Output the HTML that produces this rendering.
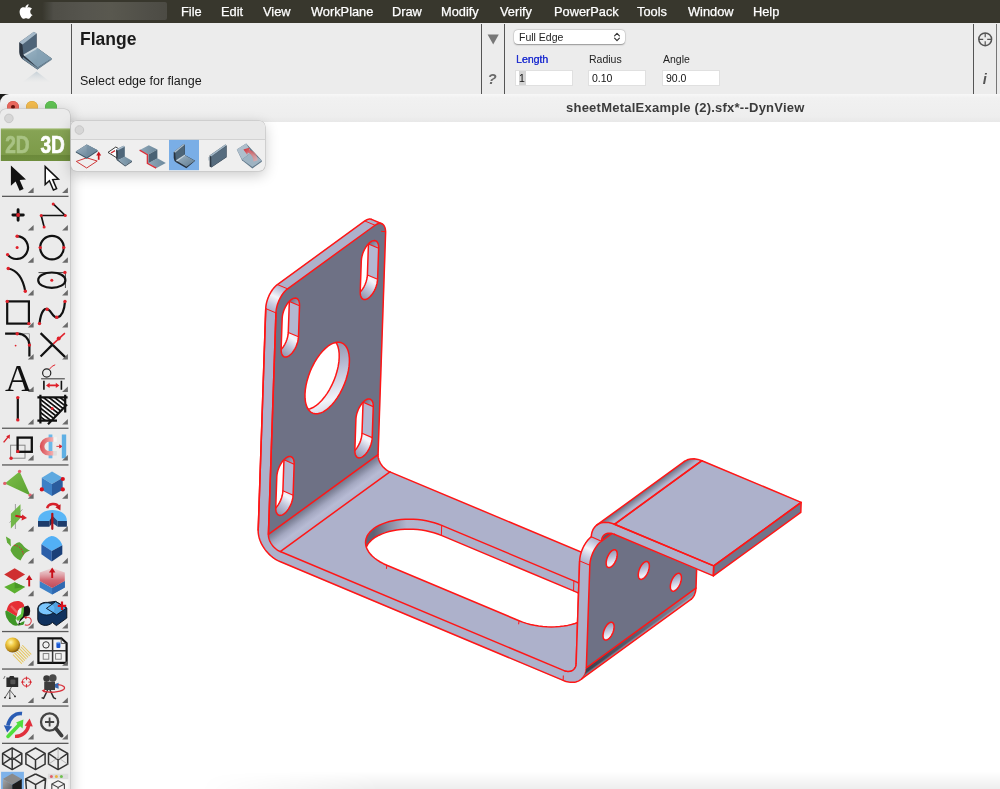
<!DOCTYPE html>
<html>
<head>
<meta charset="utf-8">
<title>sheetMetalExample</title>
<style>
*{box-sizing:border-box;margin:0;padding:0}
html,body{width:1000px;height:789px;overflow:hidden;background:#fff;font-family:"Liberation Sans",sans-serif;}
#root{position:relative;width:1000px;height:789px;overflow:hidden;background:#fff;opacity:.9999;will-change:transform}
.abs{position:absolute}
#menubar{left:0;top:0;width:1000px;height:23px;background:#38372d;color:#fff;font-size:12.8px}
#menubar span{position:absolute;top:3.5px;white-space:nowrap;-webkit-text-stroke:.25px #fff}
#blur{left:42px;top:2px;width:125px;height:18px;background:linear-gradient(90deg,rgba(80,79,72,0),#4f4e47 9%,#56554e 35%,#59584f 55%,#504f48 85%,#4c4b44 100%);border-radius:2px;filter:blur(.5px)}
#prompt{left:0;top:23px;width:1000px;height:72px;background:#ececec}
.vline{position:absolute;width:1px;background:#555}
#title{left:80px;top:29px;font-size:17.5px;font-weight:bold;color:#1a1a1a}
#hint{left:80px;top:73.8px;font-size:12.5px;color:#1a1a1a}
.lbl{position:absolute;font-size:10.5px;color:#222}
.inp{position:absolute;height:16px;width:58px;background:#fff;border:1px solid #e0e0e0;font-size:10.5px;color:#111;padding:1px 3px;line-height:13px}
#winbar{left:0;top:95px;width:1000px;height:26px;background:#ececec;border-top-left-radius:9px}
#wintitle{left:566px;top:100px;font-size:13px;font-weight:bold;color:#3c3c3c;white-space:nowrap;letter-spacing:.24px}
#canvas{left:0;top:122px;width:1000px;height:667px;background:#fff}
</style>
</head>
<body>
<div id="root">
  <!-- macOS menu bar -->
  <div id="menubar" class="abs">
    <div id="blur" class="abs"></div>
    <span style="left:181px">File</span>
    <span style="left:221px">Edit</span>
    <span style="left:263px">View</span>
    <span style="left:311px">WorkPlane</span>
    <span style="left:392px">Draw</span>
    <span style="left:441px">Modify</span>
    <span style="left:500px">Verify</span>
    <span style="left:554px">PowerPack</span>
    <span style="left:637px">Tools</span>
    <span style="left:688px">Window</span>
    <span style="left:753px">Help</span>
  </div>
  <!-- prompt / tool parameter bar -->
  <div id="prompt" class="abs"></div>
  <div class="vline" style="left:71px;top:24px;height:70px"></div>
  <div class="vline" style="left:481px;top:24px;height:70px"></div>
  <div class="vline" style="left:503.5px;top:24px;height:70px"></div>
  <div class="vline" style="left:973px;top:24px;height:70px"></div>
  <div id="title" class="abs">Flange</div>
  <div id="hint" class="abs">Select edge for flange</div>
  <!-- window title bar -->
  <!-- apple logo -->
  <svg class="abs" style="left:17.9px;top:3.5px" width="15.2" height="16" viewBox="0 0 170 200">
    <path fill="#fff" d="M150 145c-3 7-6 13-10 19-6 8-10 14-14 17-5 5-11 8-17 8-4 0-10-1-16-4-6-3-12-4-17-4-5 0-11 1-17 4-6 3-11 4-15 4-6 0-12-3-18-8-4-3-9-10-15-18-6-9-12-20-16-32C-9 118-11 105-11 93c0-14 3-26 9-36 5-8 11-14 19-19 8-5 16-7 25-7 5 0 11 2 19 5 8 3 13 5 15 5 2 0 8-2 18-6 9-3 17-5 24-4 18 1 31 8 40 21-16 10-24 23-24 41 0 14 5 25 15 34 4 4 9 8 15 10-1 3-3 6-4 8zM110-2c0 11-4 20-11 29-9 10-20 16-32 15 0-1 0-3 0-4 0-10 4-21 12-30 4-4 9-8 15-11 6-3 12-5 17-5 0 2 0 4 0 6z" transform="translate(20,12) scale(0.92)"/>
  </svg>
  <!-- prompt icon: flange -->
  <svg class="abs" style="left:0;top:22px" width="75" height="75" viewBox="0 22 75 75">
    <defs>
      <linearGradient id="pi1" x1="0" y1="0" x2="1" y2="1"><stop offset="0" stop-color="#9db6c6"/><stop offset="1" stop-color="#6f8ea2"/></linearGradient>
      <linearGradient id="pir" x1="0" y1="0" x2="0" y2="1"><stop offset="0" stop-color="#b9c6cf" stop-opacity=".75"/><stop offset="1" stop-color="#d8dde0" stop-opacity="0"/></linearGradient>
    </defs>
    <path d="M19.2 42.6 L33.8 32.1 L36.6 33.5 L36.6 47.6 L51.8 58.6 L37.4 69.4 L23 59.5 Q19.4 56.8 19.2 52 Z" fill="#2b3541"/>
    <path d="M22.3 43.8 L36.4 34 L36.4 47.4 L23.4 54.6 Z" fill="#4e6478"/>
    <path d="M19.3 42.3 L33.8 31.8 L36.8 33.6 L22.5 44.4 Z" fill="#a4b8c8"/>
    <path d="M23.6 55 L36.6 47.6 L51.6 58.5 L37.5 67.6 Z" fill="url(#pi1)"/>
    <path d="M23.4 54.4 L36.5 47 L37.6 48.4 L24.6 56 Z" fill="#c9d6de"/>
    <path d="M36.6 47.6 L51.6 58.5 L37.5 67.6 Z" fill="#86a2b4" opacity=".6"/>
    <path d="M23 57 L37.4 67.4 L51.8 58.4 L51.8 59.8 L37.4 69.4 L22.6 59 Z" fill="#6f8798"/>
    <path d="M36.6 71.6 L51 82.6 L22 82.6 Z" fill="url(#pir)"/>
  </svg>
  <!-- triangle & ? -->
  <svg class="abs" style="left:484px;top:30px" width="20" height="60" viewBox="484 30 20 60">
    <path d="M487.6 34.4 L498.8 34.4 L493.2 44.4 Z" fill="#777"/>
    <text x="487.5" y="84" font-family="Liberation Sans" font-style="italic" font-weight="bold" font-size="15" fill="#6a6a6a">?</text>
  </svg>
  <!-- dropdown -->
  <div class="abs" style="left:514px;top:30px;width:111px;height:14px;background:#fff;border-radius:4px;box-shadow:0 0.5px 1.5px rgba(0,0,0,.35), 0 0 0 0.5px rgba(0,0,0,.08)"></div>
  <div class="abs" style="left:519px;top:31px;font-size:10.5px;color:#222;line-height:12px">Full Edge</div>
  <svg class="abs" style="left:613px;top:32px" width="8" height="10" viewBox="0 0 8 10"><path d="M1.6 3.8 L4 1.4 L6.4 3.8 M1.6 6.2 L4 8.6 L6.4 6.2" fill="none" stroke="#333" stroke-width="1.2" stroke-linecap="round" stroke-linejoin="round"/></svg>
  <!-- labels -->
  <div class="lbl" style="left:516px;top:53px;color:#1f2fd0;text-shadow:0.3px 0 0 #1f2fd0">Length</div>
  <div class="lbl" style="left:589px;top:53px">Radius</div>
  <div class="lbl" style="left:663px;top:53px">Angle</div>
  <div class="inp" style="left:515px;top:70px"><span style="background:#d4d4d4;padding:1px 1px 1px 0">1</span></div>
  <div class="inp" style="left:588px;top:70px">0.10</div>
  <div class="inp" style="left:662px;top:70px">90.0</div>
  <!-- right icons -->
  <svg class="abs" style="left:975px;top:28px" width="22" height="62" viewBox="975 28 22 62">
    <circle cx="985.2" cy="39.3" r="6.4" fill="none" stroke="#555" stroke-width="1.5"/>
    <path d="M985.2 33 V37.3 M985.2 41.3 V45.6 M978.9 39.3 H983.2 M987.2 39.3 H991.5" stroke="#555" stroke-width="1.2"/>
    <text x="982.8" y="83.6" font-family="Liberation Sans" font-style="italic" font-weight="bold" font-size="14.5" fill="#555">i</text>
  </svg>
  <div class="vline" style="left:996px;top:24px;height:70px;background:#777"></div>
  <!-- window corner + traffic lights -->
  <div class="abs" style="left:0;top:94px;width:12px;height:12px;background:#1c1c1a"></div>
  <div class="abs" style="left:0;top:94px;width:1000px;height:28px;background:linear-gradient(#f7f7f7 0,#f1f1f1 14%,#eeeeee 80%,#e8e8e8 100%);border-top-left-radius:9px"></div>
  <div class="abs" style="left:7.2px;top:101.3px;width:12px;height:12px;border-radius:6px;background:#ee6a5f;box-shadow:inset 0 0 0 .5px #d5554a"></div>
  <div class="abs" style="left:11.2px;top:105.3px;width:4px;height:4px;border-radius:2px;background:#6b120d"></div>
  <div class="abs" style="left:26.2px;top:101.3px;width:12px;height:12px;border-radius:6px;background:#f5bd4f;box-shadow:inset 0 0 0 .5px #dba53d"></div>
  <div class="abs" style="left:45.2px;top:101.3px;width:12px;height:12px;border-radius:6px;background:#61c454;box-shadow:inset 0 0 0 .5px #4fae43"></div>

  <div id="wintitle" class="abs">sheetMetalExample (2).sfx*--DynView</div>
  <div id="canvas" class="abs"></div>
  <div class="abs" style="left:200px;top:771px;width:800px;height:18px;background:linear-gradient(rgba(0,0,0,0),rgba(0,0,0,.065));-webkit-mask-image:linear-gradient(90deg,transparent,#000 180px);mask-image:linear-gradient(90deg,transparent,#000 180px)"></div>
<svg class="abs" id="model" style="left:0;top:0" width="1000" height="789" viewBox="0 0 1000 789"><defs><linearGradient id="gBody" gradientUnits="userSpaceOnUse" x1="266.28" y1="292.62" x2="279.65" y2="299.28"><stop offset="0" stop-color="#b9bdd6"/><stop offset="1" stop-color="#b9bdd6"/></linearGradient><linearGradient id="gCorner1" gradientUnits="userSpaceOnUse" x1="270.84" y1="310.76" x2="282.49" y2="286.69"><stop offset="0" stop-color="#adb1cb"/><stop offset="0.25" stop-color="#c9cce0"/><stop offset="0.55" stop-color="#f4f5fa"/><stop offset="0.85" stop-color="#c3c6dc"/><stop offset="1" stop-color="#adb1cb"/></linearGradient><linearGradient id="gSlotWall" gradientUnits="userSpaceOnUse" x1="373.99" y1="528.41" x2="451.89" y2="529.67"><stop offset="0" stop-color="#5f6274"/><stop offset="0.18" stop-color="#858a9f"/><stop offset="0.42" stop-color="#b2b6ce"/><stop offset="1" stop-color="#adb1cb"/></linearGradient><clipPath id="cSlot"><path d="M441.69,525.39 L438.08,523.99 L434.28,522.76 L430.33,521.69 L426.26,520.81 L422.10,520.11 L417.87,519.61 L413.63,519.30 L409.38,519.18 L405.17,519.27 L401.04,519.56 L397.00,520.04 L393.09,520.71 L389.35,521.57 L385.79,522.61 L382.46,523.83 L379.36,525.21 L376.53,526.74 L373.99,528.41 L371.75,530.21 L369.84,532.13 L368.27,534.14 L367.04,536.25 L366.18,538.42 L365.68,540.64 L365.55,542.90 L365.79,545.18 L366.41,547.45 L367.38,549.72 L368.71,551.94 L370.39,554.12 L372.41,556.23 L374.74,558.26 L377.37,560.19 L380.29,562.01 L383.46,563.70 L386.87,565.24 L519.06,620.71 L522.67,622.11 L526.47,623.35 L530.42,624.41 L534.49,625.29 L538.65,625.99 L542.88,626.50 L547.12,626.81 L551.37,626.92 L555.58,626.83 L559.71,626.55 L563.75,626.06 L567.66,625.39 L571.40,624.53 L574.96,623.49 L578.29,622.27 L581.39,620.90 L584.22,619.36 L586.76,617.69 L589.00,615.89 L590.91,613.97 L592.48,611.96 L593.71,609.86 L594.57,607.69 L595.07,605.46 L595.20,603.20 L594.96,600.93 L594.34,598.65 L593.37,596.39 L592.04,594.16 L590.36,591.98 L588.34,589.87 L586.01,587.84 L583.38,585.91 L580.46,584.10 L577.29,582.41 L573.88,580.86Z"/></clipPath><linearGradient id="gBend1" gradientUnits="userSpaceOnUse" x1="323.23" y1="494.54" x2="335.47" y2="511.38"><stop offset="0" stop-color="#72758a"/><stop offset="0.18" stop-color="#85899f"/><stop offset="0.42" stop-color="#a4a8c1"/><stop offset="0.7" stop-color="#b7bbd4"/><stop offset="1" stop-color="#b2b6cf"/></linearGradient><clipPath id="cgbh"><path d="M349.40,361.85 L349.36,357.81 L348.93,354.12 L348.13,350.83 L346.97,348.01 L345.48,345.71 L343.67,343.95 L341.58,342.78 L339.24,342.21 L336.70,342.25 L334.00,342.91 L331.17,344.16 L328.28,345.99 L325.38,348.38 L322.50,351.26 L319.70,354.61 L317.03,358.35 L314.54,362.44 L312.26,366.78 L310.24,371.32 L308.51,375.98 L307.10,380.66 L306.03,385.31 L305.32,389.82 L304.99,394.14 L305.04,398.18 L305.46,401.87 L306.26,405.16 L307.42,407.98 L308.92,410.28 L310.72,412.04 L312.81,413.21 L315.15,413.78 L317.69,413.74 L320.40,413.08 L323.22,411.83 L326.11,409.99 L329.02,407.61 L331.89,404.73 L334.69,401.38 L337.36,397.64 L339.85,393.55 L342.13,389.21 L344.15,384.67 L345.89,380.01 L347.30,375.33 L348.37,370.68 L349.07,366.17Z"/></clipPath><linearGradient id="gbh" gradientUnits="userSpaceOnUse" x1="329.42" y1="342.21" x2="349.40" y2="413.78"><stop offset="0" stop-color="#8f93aa"/><stop offset="0.35" stop-color="#b9bdd5"/><stop offset="0.75" stop-color="#f2f3f9"/><stop offset="1" stop-color="#c4c7dc"/></linearGradient><clipPath id="cgs1"><path d="M294.15,464.14 L294.09,462.07 L293.77,460.25 L293.20,458.74 L292.39,457.59 L291.37,456.82 L290.18,456.47 L288.84,456.55 L287.40,457.05 L285.90,457.95 L284.39,459.24 L282.91,460.86 L281.50,462.78 L280.22,464.93 L279.10,467.25 L278.17,469.66 L277.47,472.10 L277.00,474.49 L276.80,476.76 L275.74,507.76 L275.80,509.83 L276.12,511.65 L276.69,513.16 L277.50,514.32 L278.52,515.08 L279.71,515.43 L281.05,515.35 L282.49,514.86 L283.99,513.95 L285.51,512.67 L286.99,511.04 L288.39,509.12 L289.67,506.97 L290.79,504.65 L291.72,502.24 L292.43,499.80 L292.89,497.41 L293.09,495.14Z"/></clipPath><linearGradient id="gs1t" gradientUnits="userSpaceOnUse" x1="294.15" y1="464.14" x2="285.90" y2="457.95"><stop offset="0" stop-color="#a9adc6"/><stop offset="0.5" stop-color="#8e92a8"/><stop offset="1" stop-color="#6f7286"/></linearGradient><linearGradient id="gs1b" gradientUnits="userSpaceOnUse" x1="293.09" y1="495.14" x2="278.52" y2="515.08"><stop offset="0" stop-color="#e9eaf3"/><stop offset="0.2" stop-color="#f4f5fa"/><stop offset="0.55" stop-color="#bfc3d9"/><stop offset="1" stop-color="#8f93ab"/></linearGradient><clipPath id="cgs2"><path d="M299.53,305.74 L299.48,303.67 L299.16,301.85 L298.58,300.34 L297.78,299.19 L296.76,298.42 L295.56,298.07 L294.22,298.15 L292.78,298.65 L291.28,299.55 L289.77,300.84 L288.29,302.46 L286.89,304.38 L285.61,306.53 L284.49,308.85 L283.56,311.26 L282.85,313.70 L282.39,316.09 L282.18,318.36 L281.13,349.36 L281.19,351.43 L281.51,353.25 L282.08,354.76 L282.89,355.92 L283.90,356.68 L285.10,357.03 L286.44,356.95 L287.88,356.46 L289.38,355.55 L290.89,354.27 L292.37,352.64 L293.77,350.72 L295.06,348.57 L296.18,346.25 L297.10,343.84 L297.81,341.40 L298.27,339.01 L298.48,336.74Z"/></clipPath><linearGradient id="gs2t" gradientUnits="userSpaceOnUse" x1="299.53" y1="305.74" x2="291.28" y2="299.55"><stop offset="0" stop-color="#a9adc6"/><stop offset="0.5" stop-color="#8e92a8"/><stop offset="1" stop-color="#6f7286"/></linearGradient><linearGradient id="gs2b" gradientUnits="userSpaceOnUse" x1="298.48" y1="336.74" x2="283.90" y2="356.68"><stop offset="0" stop-color="#e9eaf3"/><stop offset="0.2" stop-color="#f4f5fa"/><stop offset="0.55" stop-color="#bfc3d9"/><stop offset="1" stop-color="#8f93ab"/></linearGradient><clipPath id="cgs3"><path d="M373.26,406.63 L373.21,404.56 L372.89,402.74 L372.31,401.23 L371.51,400.07 L370.49,399.31 L369.29,398.96 L367.96,399.03 L366.51,399.53 L365.01,400.44 L363.50,401.72 L362.02,403.35 L360.62,405.27 L359.34,407.42 L358.22,409.73 L357.29,412.15 L356.58,414.59 L356.12,416.98 L355.91,419.24 L354.86,450.24 L354.92,452.32 L355.24,454.14 L355.81,455.65 L356.62,456.80 L357.63,457.57 L358.83,457.92 L360.17,457.84 L361.61,457.34 L363.11,456.44 L364.62,455.15 L366.10,453.53 L367.50,451.61 L368.79,449.46 L369.91,447.14 L370.84,444.73 L371.54,442.29 L372.00,439.90 L372.21,437.63Z"/></clipPath><linearGradient id="gs3t" gradientUnits="userSpaceOnUse" x1="373.26" y1="406.63" x2="365.01" y2="400.44"><stop offset="0" stop-color="#a9adc6"/><stop offset="0.5" stop-color="#8e92a8"/><stop offset="1" stop-color="#6f7286"/></linearGradient><linearGradient id="gs3b" gradientUnits="userSpaceOnUse" x1="372.21" y1="437.63" x2="357.63" y2="457.57"><stop offset="0" stop-color="#e9eaf3"/><stop offset="0.2" stop-color="#f4f5fa"/><stop offset="0.55" stop-color="#bfc3d9"/><stop offset="1" stop-color="#8f93ab"/></linearGradient><clipPath id="cgs4"><path d="M378.65,248.23 L378.59,246.16 L378.27,244.34 L377.70,242.83 L376.89,241.67 L375.88,240.91 L374.68,240.56 L373.34,240.63 L371.90,241.13 L370.40,242.04 L368.89,243.32 L367.41,244.95 L366.01,246.87 L364.72,249.02 L363.60,251.33 L362.67,253.75 L361.97,256.19 L361.51,258.58 L361.30,260.84 L360.25,291.84 L360.30,293.92 L360.62,295.74 L361.20,297.25 L362.00,298.40 L363.02,299.17 L364.21,299.52 L365.55,299.44 L367.00,298.94 L368.50,298.04 L370.01,296.75 L371.49,295.13 L372.89,293.21 L374.17,291.06 L375.29,288.74 L376.22,286.33 L376.93,283.89 L377.39,281.50 L377.60,279.23Z"/></clipPath><linearGradient id="gs4t" gradientUnits="userSpaceOnUse" x1="378.65" y1="248.23" x2="370.40" y2="242.04"><stop offset="0" stop-color="#a9adc6"/><stop offset="0.5" stop-color="#8e92a8"/><stop offset="1" stop-color="#6f7286"/></linearGradient><linearGradient id="gs4b" gradientUnits="userSpaceOnUse" x1="377.60" y1="279.23" x2="363.02" y2="299.17"><stop offset="0" stop-color="#e9eaf3"/><stop offset="0.2" stop-color="#f4f5fa"/><stop offset="0.55" stop-color="#bfc3d9"/><stop offset="1" stop-color="#8f93ab"/></linearGradient><linearGradient id="gCorner2" gradientUnits="userSpaceOnUse" x1="584.73" y1="563.07" x2="596.38" y2="539.00"><stop offset="0" stop-color="#adb1cb"/><stop offset="0.25" stop-color="#c9cce0"/><stop offset="0.55" stop-color="#f4f5fa"/><stop offset="0.85" stop-color="#c3c6dc"/><stop offset="1" stop-color="#adb1cb"/></linearGradient><linearGradient id="gUnderL" gradientUnits="userSpaceOnUse" x1="584.73" y1="674.76" x2="694.38" y2="595.05"><stop offset="0" stop-color="#3b3e4b"/><stop offset="0.5" stop-color="#5d6072"/><stop offset="1" stop-color="#858a9e"/></linearGradient><linearGradient id="gUnder" gradientUnits="userSpaceOnUse" x1="586.34" y1="667.81" x2="590.00" y2="672.84"><stop offset="0" stop-color="rgba(200,203,221,0)"/><stop offset="0.55" stop-color="rgba(200,203,221,0)"/><stop offset="1" stop-color="rgba(200,203,221,.75)"/></linearGradient><clipPath id="cgsh0"><path d="M617.26,554.63 L617.21,553.14 L616.95,551.87 L616.48,550.86 L615.83,550.15 L615.02,549.77 L614.09,549.73 L613.06,550.03 L611.98,550.66 L610.90,551.60 L609.84,552.82 L608.85,554.25 L607.98,555.86 L607.25,557.57 L606.69,559.33 L606.32,561.06 L606.16,562.70 L606.21,564.18 L606.48,565.45 L606.94,566.46 L607.59,567.17 L608.40,567.56 L609.34,567.60 L610.36,567.30 L611.44,566.66 L612.53,565.72 L613.59,564.51 L614.57,563.07 L615.45,561.47 L616.18,559.75 L616.74,558.00 L617.10,556.27Z"/></clipPath><linearGradient id="gsh0" gradientUnits="userSpaceOnUse" x1="612.27" y1="549.73" x2="617.26" y2="567.60"><stop offset="0" stop-color="#8f93aa"/><stop offset="0.35" stop-color="#b9bdd5"/><stop offset="0.75" stop-color="#f2f3f9"/><stop offset="1" stop-color="#c4c7dc"/></linearGradient><clipPath id="cgsh1"><path d="M649.35,566.41 L649.30,564.93 L649.03,563.66 L648.57,562.65 L647.92,561.94 L647.11,561.55 L646.18,561.51 L645.15,561.81 L644.07,562.45 L642.98,563.39 L641.93,564.60 L640.94,566.04 L640.07,567.64 L639.33,569.36 L638.77,571.11 L638.41,572.85 L638.25,574.48 L638.30,575.97 L638.57,577.24 L639.03,578.25 L639.68,578.96 L640.49,579.34 L641.42,579.38 L642.45,579.08 L643.53,578.45 L644.62,577.51 L645.67,576.29 L646.66,574.86 L647.53,573.25 L648.27,571.54 L648.83,569.78 L649.19,568.05Z"/></clipPath><linearGradient id="gsh1" gradientUnits="userSpaceOnUse" x1="644.36" y1="561.51" x2="649.35" y2="579.38"><stop offset="0" stop-color="#8f93aa"/><stop offset="0.35" stop-color="#b9bdd5"/><stop offset="0.75" stop-color="#f2f3f9"/><stop offset="1" stop-color="#c4c7dc"/></linearGradient><clipPath id="cgsh2"><path d="M681.44,578.20 L681.39,576.71 L681.12,575.44 L680.66,574.43 L680.01,573.72 L679.20,573.34 L678.26,573.30 L677.24,573.60 L676.16,574.23 L675.07,575.17 L674.01,576.39 L673.03,577.82 L672.15,579.43 L671.42,581.14 L670.86,582.90 L670.50,584.63 L670.34,586.27 L670.39,587.75 L670.65,589.02 L671.12,590.03 L671.77,590.74 L672.58,591.13 L673.51,591.17 L674.54,590.87 L675.62,590.23 L676.70,589.29 L677.76,588.08 L678.75,586.64 L679.62,585.03 L680.35,583.32 L680.91,581.56 L681.28,579.83Z"/></clipPath><linearGradient id="gsh2" gradientUnits="userSpaceOnUse" x1="676.44" y1="573.30" x2="681.44" y2="591.17"><stop offset="0" stop-color="#8f93aa"/><stop offset="0.35" stop-color="#b9bdd5"/><stop offset="0.75" stop-color="#f2f3f9"/><stop offset="1" stop-color="#c4c7dc"/></linearGradient><clipPath id="cgsh3"><path d="M614.12,627.13 L614.07,625.65 L613.80,624.38 L613.34,623.37 L612.69,622.66 L611.88,622.27 L610.95,622.23 L609.92,622.53 L608.84,623.17 L607.75,624.11 L606.70,625.32 L605.71,626.76 L604.84,628.37 L604.10,630.08 L603.54,631.84 L603.18,633.57 L603.02,635.20 L603.07,636.69 L603.34,637.96 L603.80,638.97 L604.45,639.68 L605.26,640.06 L606.19,640.10 L607.22,639.80 L608.30,639.17 L609.39,638.23 L610.44,637.01 L611.43,635.58 L612.30,633.97 L613.04,632.26 L613.60,630.50 L613.96,628.77Z"/></clipPath><linearGradient id="gsh3" gradientUnits="userSpaceOnUse" x1="609.13" y1="622.23" x2="614.12" y2="640.10"><stop offset="0" stop-color="#8f93aa"/><stop offset="0.35" stop-color="#b9bdd5"/><stop offset="0.75" stop-color="#f2f3f9"/><stop offset="1" stop-color="#c4c7dc"/></linearGradient><linearGradient id="gBend3" gradientUnits="userSpaceOnUse" x1="596.96" y1="524.96" x2="602.69" y2="532.84"><stop offset="0" stop-color="#6a6d80"/><stop offset="0.35" stop-color="#8d91a7"/><stop offset="0.75" stop-color="#b3b7cf"/><stop offset="1" stop-color="#adb1cb"/></linearGradient></defs><path d="M258.21,530.12 L265.74,308.62 L265.80,307.56 L265.90,306.46 L266.06,305.34 L266.26,304.20 L266.50,303.05 L266.79,301.88 L267.12,300.71 L267.50,299.54 L267.91,298.37 L268.37,297.21 L268.85,296.07 L269.38,294.94 L269.93,293.84 L270.51,292.77 L271.13,291.73 L271.76,290.73 L272.42,289.77 L273.10,288.86 L273.79,287.99 L274.50,287.18 L275.21,286.43 L275.93,285.74 L276.66,285.11 L277.39,284.55 L364.83,220.98 L365.56,220.49 L366.28,220.06 L366.99,219.71 L367.69,219.44 L368.37,219.24 L369.04,219.11 L369.69,219.06 L370.31,219.09 L370.91,219.19 L371.48,219.37 L381.68,223.65 L382.22,223.91 L382.72,224.24 L383.19,224.64 L383.63,225.12 L384.02,225.66 L384.38,226.27 L384.69,226.94 L384.95,227.68 L385.18,228.47 L385.35,229.32 L385.48,230.22 L385.57,231.17 L385.60,232.16 L385.59,233.19 L378.06,454.69 L268.41,534.40Z" fill="#adb1cb" stroke="#adb1cb" stroke-width="0.6" stroke-linejoin="round" stroke-linecap="round" />
<path d="M265.74,308.62 L265.80,307.56 L265.91,306.46 L266.06,305.34 L266.26,304.20 L266.50,303.05 L266.79,301.88 L267.12,300.71 L267.50,299.54 L267.91,298.37 L268.36,297.21 L268.85,296.07 L269.38,294.94 L269.93,293.84 L270.51,292.77 L271.13,291.73 L271.76,290.73 L272.42,289.77 L273.10,288.85 L273.79,287.99 L274.49,287.18 L275.21,286.43 L275.93,285.74 L276.66,285.11 L277.39,284.55 L287.59,288.83 L286.86,289.39 L286.13,290.02 L285.41,290.71 L284.69,291.46 L283.99,292.27 L283.30,293.13 L282.62,294.05 L281.96,295.01 L281.33,296.01 L280.71,297.05 L280.13,298.12 L279.58,299.22 L279.05,300.35 L278.56,301.49 L278.11,302.65 L277.70,303.82 L277.32,304.99 L276.99,306.16 L276.70,307.33 L276.46,308.48 L276.26,309.62 L276.11,310.74 L276.00,311.84 L275.94,312.90Z" fill="url(#gCorner1)" stroke="none" stroke-width="1.5" stroke-linejoin="round" stroke-linecap="round" />
<path d="M275.94,312.90 L268.41,534.40 L268.41,534.40 L268.41,535.20 L268.46,536.01 L268.56,536.84 L268.72,537.68 L268.93,538.53 L269.18,539.38 L269.49,540.24 L269.84,541.09 L270.24,541.93 L270.69,542.77 L271.18,543.59 L271.70,544.39 L272.27,545.17 L272.87,545.93 L273.51,546.66 L274.17,547.36 L274.87,548.03 L275.59,548.66 L276.33,549.25 L277.09,549.80 L277.86,550.30 L278.65,550.76 L279.44,551.17 L280.24,551.54 L563.49,670.39 L563.49,670.39 L564.30,670.70 L565.10,670.96 L565.89,671.16 L566.68,671.31 L567.45,671.41 L568.21,671.44 L568.95,671.43 L569.67,671.35 L570.36,671.22 L571.03,671.04 L571.67,670.80 L572.27,670.51 L572.84,670.17 L573.36,669.77 L573.85,669.33 L574.30,668.84 L574.70,668.31 L575.05,667.73 L575.36,667.11 L575.62,666.46 L575.83,665.77 L575.98,665.05 L576.09,664.30 L576.14,663.53 L579.63,560.93 L589.83,565.21 L586.34,667.81 L586.25,669.23 L586.05,670.60 L585.76,671.92 L585.38,673.18 L584.91,674.38 L584.35,675.51 L583.70,676.57 L582.96,677.55 L582.14,678.44 L581.25,679.25 L580.28,679.98 L579.24,680.61 L578.14,681.14 L576.97,681.58 L575.75,681.92 L574.47,682.15 L573.16,682.29 L571.80,682.32 L570.41,682.25 L568.99,682.08 L567.55,681.81 L566.09,681.43 L564.62,680.96 L563.15,680.39 L563.15,680.39 L279.90,561.54 L278.43,560.87 L276.98,560.12 L275.54,559.28 L274.12,558.35 L272.73,557.34 L271.37,556.26 L270.05,555.10 L268.78,553.88 L267.56,552.60 L266.39,551.26 L265.29,549.87 L264.25,548.43 L263.28,546.96 L262.39,545.46 L261.57,543.93 L260.84,542.38 L260.19,540.82 L259.63,539.26 L259.16,537.69 L258.78,536.13 L258.49,534.59 L258.30,533.07 L258.21,531.58 L258.21,530.12 L258.21,530.12 L265.74,308.62Z" fill="#adb1cb" stroke="#adb1cb" stroke-width="0.6" stroke-linejoin="round" stroke-linecap="round" />
<path d="M441.69,525.39 L438.08,523.99 L434.28,522.76 L430.33,521.69 L426.26,520.81 L422.10,520.11 L417.87,519.61 L413.63,519.30 L409.38,519.18 L405.17,519.27 L401.04,519.56 L397.00,520.04 L393.09,520.71 L389.35,521.57 L385.79,522.61 L382.46,523.83 L379.36,525.21 L376.53,526.74 L373.99,528.41 L371.75,530.21 L369.84,532.13 L368.27,534.14 L367.04,536.25 L366.18,538.42 L365.68,540.64 L365.55,542.90 L365.79,545.18 L366.41,547.45 L367.38,549.72 L368.71,551.94 L370.39,554.12 L372.41,556.23 L374.74,558.26 L377.37,560.19 L380.29,562.01 L383.46,563.70 L386.87,565.24 L519.06,620.71 L522.67,622.11 L526.47,623.35 L530.42,624.41 L534.49,625.29 L538.65,625.99 L542.88,626.50 L547.12,626.81 L551.37,626.92 L555.58,626.83 L559.71,626.55 L563.75,626.06 L567.66,625.39 L571.40,624.53 L574.96,623.49 L578.29,622.27 L581.39,620.90 L584.22,619.36 L586.76,617.69 L589.00,615.89 L590.91,613.97 L592.48,611.96 L593.71,609.86 L594.57,607.69 L595.07,605.46 L595.20,603.20 L594.96,600.93 L594.34,598.65 L593.37,596.39 L592.04,594.16 L590.36,591.98 L588.34,589.87 L586.01,587.84 L583.38,585.91 L580.46,584.10 L577.29,582.41 L573.88,580.86Z" fill="url(#gSlotWall)" stroke="none" stroke-width="1.5" stroke-linejoin="round" stroke-linecap="round" />
<g clip-path="url(#cSlot)">
<path d="M441.35,535.39 L437.74,533.99 L433.94,532.76 L429.99,531.69 L425.92,530.81 L421.76,530.11 L417.53,529.61 L413.29,529.30 L409.04,529.18 L404.83,529.27 L400.70,529.56 L396.66,530.04 L392.75,530.71 L389.01,531.57 L385.45,532.61 L382.12,533.83 L379.02,535.21 L376.19,536.74 L373.65,538.41 L371.41,540.21 L369.50,542.13 L367.93,544.14 L366.70,546.25 L365.84,548.42 L365.34,550.64 L365.21,552.90 L365.45,555.18 L366.07,557.45 L367.04,559.72 L368.37,561.94 L370.05,564.12 L372.07,566.23 L374.40,568.26 L377.03,570.19 L379.95,572.01 L383.12,573.70 L386.53,575.24 L518.72,630.71 L522.33,632.11 L526.13,633.35 L530.08,634.41 L534.15,635.29 L538.31,635.99 L542.54,636.50 L546.78,636.81 L551.03,636.92 L555.24,636.83 L559.37,636.55 L563.41,636.06 L567.32,635.39 L571.06,634.53 L574.62,633.49 L577.95,632.27 L581.05,630.90 L583.88,629.36 L586.42,627.69 L588.66,625.89 L590.57,623.97 L592.14,621.96 L593.37,619.86 L594.23,617.69 L594.73,615.46 L594.86,613.20 L594.62,610.93 L594.00,608.65 L593.03,606.39 L591.70,604.16 L590.02,601.98 L588.00,599.87 L585.67,597.84 L583.04,595.91 L580.12,594.10 L576.95,592.41 L573.54,590.86Z" fill="#fff" stroke="#ff1616" stroke-width="1.5" stroke-linejoin="round" stroke-linecap="round" />
</g>
<path d="M280.24,551.54 L575.73,675.53 L685.39,595.82 L389.89,471.82ZM441.69,525.39 L438.08,523.99 L434.28,522.76 L430.33,521.69 L426.26,520.81 L422.10,520.11 L417.87,519.61 L413.63,519.30 L409.38,519.18 L405.17,519.27 L401.04,519.56 L397.00,520.04 L393.09,520.71 L389.35,521.57 L385.79,522.61 L382.46,523.83 L379.36,525.21 L376.53,526.74 L373.99,528.41 L371.75,530.21 L369.84,532.13 L368.27,534.14 L367.04,536.25 L366.18,538.42 L365.68,540.64 L365.55,542.90 L365.79,545.18 L366.41,547.45 L367.38,549.72 L368.71,551.94 L370.39,554.12 L372.41,556.23 L374.74,558.26 L377.37,560.19 L380.29,562.01 L383.46,563.70 L386.87,565.24 L519.06,620.71 L522.67,622.11 L526.47,623.35 L530.42,624.41 L534.49,625.29 L538.65,625.99 L542.88,626.50 L547.12,626.81 L551.37,626.92 L555.58,626.83 L559.71,626.55 L563.75,626.06 L567.66,625.39 L571.40,624.53 L574.96,623.49 L578.29,622.27 L581.39,620.90 L584.22,619.36 L586.76,617.69 L589.00,615.89 L590.91,613.97 L592.48,611.96 L593.71,609.86 L594.57,607.69 L595.07,605.46 L595.20,603.20 L594.96,600.93 L594.34,598.65 L593.37,596.39 L592.04,594.16 L590.36,591.98 L588.34,589.87 L586.01,587.84 L583.38,585.91 L580.46,584.10 L577.29,582.41 L573.88,580.86Z" fill="#adb1cb" stroke="none" stroke-width="1.5" stroke-linejoin="round" stroke-linecap="round" fill-rule="evenodd"/>
<path d="M268.41,534.40 L268.41,535.20 L268.46,536.01 L268.56,536.84 L268.72,537.68 L268.93,538.53 L269.18,539.38 L269.49,540.24 L269.84,541.09 L270.24,541.93 L270.69,542.77 L271.18,543.59 L271.70,544.39 L272.27,545.17 L272.87,545.93 L273.51,546.66 L274.17,547.36 L274.87,548.03 L275.59,548.66 L276.33,549.25 L277.09,549.80 L277.86,550.30 L278.65,550.76 L279.44,551.17 L280.24,551.54 L389.89,471.82 L389.09,471.46 L388.30,471.05 L387.51,470.59 L386.74,470.09 L385.98,469.54 L385.24,468.95 L384.52,468.32 L383.83,467.65 L383.16,466.95 L382.53,466.22 L381.92,465.46 L381.36,464.68 L380.83,463.88 L380.34,463.06 L379.90,462.22 L379.50,461.38 L379.14,460.53 L378.84,459.67 L378.58,458.82 L378.37,457.97 L378.22,457.13 L378.11,456.30 L378.06,455.48 L378.06,454.69Z" fill="url(#gBend1)" stroke="none" stroke-width="1.5" stroke-linejoin="round" stroke-linecap="round" />
<path d="M349.40,361.85 L349.36,357.81 L348.93,354.12 L348.13,350.83 L346.97,348.01 L345.48,345.71 L343.67,343.95 L341.58,342.78 L339.24,342.21 L336.70,342.25 L334.00,342.91 L331.17,344.16 L328.28,345.99 L325.38,348.38 L322.50,351.26 L319.70,354.61 L317.03,358.35 L314.54,362.44 L312.26,366.78 L310.24,371.32 L308.51,375.98 L307.10,380.66 L306.03,385.31 L305.32,389.82 L304.99,394.14 L305.04,398.18 L305.46,401.87 L306.26,405.16 L307.42,407.98 L308.92,410.28 L310.72,412.04 L312.81,413.21 L315.15,413.78 L317.69,413.74 L320.40,413.08 L323.22,411.83 L326.11,409.99 L329.02,407.61 L331.89,404.73 L334.69,401.38 L337.36,397.64 L339.85,393.55 L342.13,389.21 L344.15,384.67 L345.89,380.01 L347.30,375.33 L348.37,370.68 L349.07,366.17Z" fill="url(#gbh)" stroke="none" stroke-width="1.5" stroke-linejoin="round" stroke-linecap="round" />
<g clip-path="url(#cgbh)">
<path d="M339.20,357.57 L339.16,353.53 L338.73,349.84 L337.93,346.55 L336.77,343.73 L335.28,341.43 L333.47,339.67 L331.38,338.50 L329.04,337.93 L326.50,337.97 L323.80,338.63 L320.97,339.88 L318.08,341.71 L315.18,344.10 L312.30,346.98 L309.50,350.33 L306.83,354.07 L304.34,358.16 L302.06,362.50 L300.04,367.04 L298.31,371.70 L296.90,376.38 L295.83,381.03 L295.12,385.54 L294.79,389.86 L294.84,393.90 L295.26,397.59 L296.06,400.88 L297.22,403.70 L298.72,406.00 L300.52,407.76 L302.61,408.93 L304.95,409.50 L307.49,409.46 L310.20,408.80 L313.02,407.55 L315.91,405.71 L318.82,403.33 L321.69,400.45 L324.49,397.10 L327.16,393.36 L329.65,389.27 L331.93,384.93 L333.95,380.39 L335.69,375.73 L337.10,371.05 L338.17,366.40 L338.87,361.89Z" fill="#fff" stroke="#ff1616" stroke-width="1.5" stroke-linejoin="round" stroke-linecap="round" />
</g>
<path d="M294.15,464.14 L294.09,462.07 L293.77,460.25 L293.20,458.74 L292.39,457.59 L291.37,456.82 L290.18,456.47 L288.84,456.55 L287.40,457.05 L285.90,457.95 L284.39,459.24 L282.91,460.86 L281.50,462.78 L280.22,464.93 L279.10,467.25 L278.17,469.66 L277.47,472.10 L277.00,474.49 L276.80,476.76 L275.74,507.76 L275.80,509.83 L276.12,511.65 L276.69,513.16 L277.50,514.32 L278.52,515.08 L279.71,515.43 L281.05,515.35 L282.49,514.86 L283.99,513.95 L285.51,512.67 L286.99,511.04 L288.39,509.12 L289.67,506.97 L290.79,504.65 L291.72,502.24 L292.43,499.80 L292.89,497.41 L293.09,495.14Z" fill="#b3b7d1" stroke="none" stroke-width="1.5" stroke-linejoin="round" stroke-linecap="round" />
<g clip-path="url(#cgs1)">
<path d="M294.15,464.14 L294.09,462.07 L293.77,460.25 L293.20,458.74 L292.39,457.59 L291.37,456.82 L290.18,456.47 L288.84,456.55 L287.40,457.05 L285.90,457.95 L284.39,459.24 L282.91,460.86 L281.50,462.78 L280.22,464.93 L279.10,467.25 L278.17,469.66 L277.47,472.10 L277.00,474.49 L276.80,476.76 L266.60,472.48 L266.80,470.21 L267.27,467.82 L267.97,465.38 L268.90,462.97 L270.02,460.65 L271.30,458.50 L272.71,456.58 L274.19,454.96 L275.70,453.67 L277.20,452.77 L278.64,452.27 L279.98,452.19 L281.17,452.54 L282.19,453.31 L283.00,454.46 L283.57,455.97 L283.89,457.79 L283.95,459.86Z" fill="url(#gs1t)" stroke="none" stroke-width="1.5" stroke-linejoin="round" stroke-linecap="round" />
<path d="M275.74,507.76 L275.80,509.83 L276.12,511.65 L276.69,513.16 L277.50,514.32 L278.52,515.08 L279.71,515.43 L281.05,515.35 L282.49,514.86 L283.99,513.95 L285.51,512.67 L286.99,511.04 L288.39,509.12 L289.67,506.97 L290.79,504.65 L291.72,502.24 L292.43,499.80 L292.89,497.41 L293.09,495.14 L282.89,490.86 L282.69,493.13 L282.23,495.52 L281.52,497.96 L280.59,500.37 L279.47,502.69 L278.19,504.84 L276.79,506.76 L275.31,508.39 L273.79,509.67 L272.29,510.58 L270.85,511.07 L269.51,511.15 L268.32,510.80 L267.30,510.04 L266.49,508.88 L265.92,507.37 L265.60,505.55 L265.54,503.48Z" fill="url(#gs1b)" stroke="none" stroke-width="1.5" stroke-linejoin="round" stroke-linecap="round" />
<path d="M283.95,459.86 L283.89,457.79 L283.57,455.97 L283.00,454.46 L282.19,453.31 L281.17,452.54 L279.98,452.19 L278.64,452.27 L277.20,452.77 L275.70,453.67 L274.19,454.96 L272.71,456.58 L271.30,458.50 L270.02,460.65 L268.90,462.97 L267.97,465.38 L267.27,467.82 L266.80,470.21 L266.60,472.48 L265.54,503.48 L265.60,505.55 L265.92,507.37 L266.49,508.88 L267.30,510.04 L268.32,510.80 L269.51,511.15 L270.85,511.07 L272.29,510.58 L273.79,509.67 L275.31,508.39 L276.79,506.76 L278.19,504.84 L279.47,502.69 L280.59,500.37 L281.52,497.96 L282.23,495.52 L282.69,493.13 L282.89,490.86Z" fill="#fff" stroke="#ff1616" stroke-width="1.5" stroke-linejoin="round" stroke-linecap="round" />
<path d="M294.15,464.14 L283.95,459.86" fill="none" stroke="#ff1616" stroke-width="1.1" stroke-linejoin="round" stroke-linecap="round" />
<path d="M293.09,495.14 L282.89,490.86" fill="none" stroke="#ff1616" stroke-width="1.1" stroke-linejoin="round" stroke-linecap="round" />
</g>
<path d="M299.53,305.74 L299.48,303.67 L299.16,301.85 L298.58,300.34 L297.78,299.19 L296.76,298.42 L295.56,298.07 L294.22,298.15 L292.78,298.65 L291.28,299.55 L289.77,300.84 L288.29,302.46 L286.89,304.38 L285.61,306.53 L284.49,308.85 L283.56,311.26 L282.85,313.70 L282.39,316.09 L282.18,318.36 L281.13,349.36 L281.19,351.43 L281.51,353.25 L282.08,354.76 L282.89,355.92 L283.90,356.68 L285.10,357.03 L286.44,356.95 L287.88,356.46 L289.38,355.55 L290.89,354.27 L292.37,352.64 L293.77,350.72 L295.06,348.57 L296.18,346.25 L297.10,343.84 L297.81,341.40 L298.27,339.01 L298.48,336.74Z" fill="#b3b7d1" stroke="none" stroke-width="1.5" stroke-linejoin="round" stroke-linecap="round" />
<g clip-path="url(#cgs2)">
<path d="M299.53,305.74 L299.48,303.67 L299.16,301.85 L298.58,300.34 L297.78,299.19 L296.76,298.42 L295.56,298.07 L294.22,298.15 L292.78,298.65 L291.28,299.55 L289.77,300.84 L288.29,302.46 L286.89,304.38 L285.61,306.53 L284.49,308.85 L283.56,311.26 L282.85,313.70 L282.39,316.09 L282.18,318.36 L271.98,314.08 L272.19,311.81 L272.65,309.42 L273.36,306.98 L274.29,304.57 L275.41,302.25 L276.69,300.10 L278.09,298.18 L279.57,296.56 L281.08,295.27 L282.58,294.37 L284.02,293.87 L285.36,293.79 L286.56,294.14 L287.58,294.91 L288.38,296.06 L288.96,297.57 L289.28,299.39 L289.33,301.46Z" fill="url(#gs2t)" stroke="none" stroke-width="1.5" stroke-linejoin="round" stroke-linecap="round" />
<path d="M281.13,349.36 L281.19,351.43 L281.51,353.25 L282.08,354.76 L282.89,355.92 L283.90,356.68 L285.10,357.03 L286.44,356.95 L287.88,356.46 L289.38,355.55 L290.89,354.27 L292.37,352.64 L293.77,350.72 L295.06,348.57 L296.18,346.25 L297.10,343.84 L297.81,341.40 L298.27,339.01 L298.48,336.74 L288.28,332.46 L288.07,334.73 L287.61,337.12 L286.90,339.56 L285.98,341.97 L284.86,344.29 L283.57,346.44 L282.17,348.36 L280.69,349.99 L279.18,351.27 L277.68,352.18 L276.24,352.67 L274.90,352.75 L273.70,352.40 L272.69,351.64 L271.88,350.48 L271.31,348.97 L270.99,347.15 L270.93,345.08Z" fill="url(#gs2b)" stroke="none" stroke-width="1.5" stroke-linejoin="round" stroke-linecap="round" />
<path d="M289.33,301.46 L289.28,299.39 L288.96,297.57 L288.38,296.06 L287.58,294.91 L286.56,294.14 L285.36,293.79 L284.02,293.87 L282.58,294.37 L281.08,295.27 L279.57,296.56 L278.09,298.18 L276.69,300.10 L275.41,302.25 L274.29,304.57 L273.36,306.98 L272.65,309.42 L272.19,311.81 L271.98,314.08 L270.93,345.08 L270.99,347.15 L271.31,348.97 L271.88,350.48 L272.69,351.64 L273.70,352.40 L274.90,352.75 L276.24,352.67 L277.68,352.18 L279.18,351.27 L280.69,349.99 L282.17,348.36 L283.57,346.44 L284.86,344.29 L285.98,341.97 L286.90,339.56 L287.61,337.12 L288.07,334.73 L288.28,332.46Z" fill="#fff" stroke="#ff1616" stroke-width="1.5" stroke-linejoin="round" stroke-linecap="round" />
<path d="M299.53,305.74 L289.33,301.46" fill="none" stroke="#ff1616" stroke-width="1.1" stroke-linejoin="round" stroke-linecap="round" />
<path d="M298.48,336.74 L288.28,332.46" fill="none" stroke="#ff1616" stroke-width="1.1" stroke-linejoin="round" stroke-linecap="round" />
</g>
<path d="M373.26,406.63 L373.21,404.56 L372.89,402.74 L372.31,401.23 L371.51,400.07 L370.49,399.31 L369.29,398.96 L367.96,399.03 L366.51,399.53 L365.01,400.44 L363.50,401.72 L362.02,403.35 L360.62,405.27 L359.34,407.42 L358.22,409.73 L357.29,412.15 L356.58,414.59 L356.12,416.98 L355.91,419.24 L354.86,450.24 L354.92,452.32 L355.24,454.14 L355.81,455.65 L356.62,456.80 L357.63,457.57 L358.83,457.92 L360.17,457.84 L361.61,457.34 L363.11,456.44 L364.62,455.15 L366.10,453.53 L367.50,451.61 L368.79,449.46 L369.91,447.14 L370.84,444.73 L371.54,442.29 L372.00,439.90 L372.21,437.63Z" fill="#b3b7d1" stroke="none" stroke-width="1.5" stroke-linejoin="round" stroke-linecap="round" />
<g clip-path="url(#cgs3)">
<path d="M373.26,406.63 L373.21,404.56 L372.89,402.74 L372.31,401.23 L371.51,400.07 L370.49,399.31 L369.29,398.96 L367.96,399.03 L366.51,399.53 L365.01,400.44 L363.50,401.72 L362.02,403.35 L360.62,405.27 L359.34,407.42 L358.22,409.73 L357.29,412.15 L356.58,414.59 L356.12,416.98 L355.91,419.24 L345.71,414.96 L345.92,412.70 L346.38,410.31 L347.09,407.87 L348.02,405.45 L349.14,403.14 L350.42,400.99 L351.82,399.07 L353.30,397.44 L354.81,396.16 L356.31,395.25 L357.76,394.75 L359.09,394.68 L360.29,395.03 L361.31,395.79 L362.11,396.95 L362.69,398.46 L363.01,400.28 L363.06,402.35Z" fill="url(#gs3t)" stroke="none" stroke-width="1.5" stroke-linejoin="round" stroke-linecap="round" />
<path d="M354.86,450.24 L354.92,452.32 L355.24,454.14 L355.81,455.65 L356.62,456.80 L357.63,457.57 L358.83,457.92 L360.17,457.84 L361.61,457.34 L363.11,456.44 L364.62,455.15 L366.10,453.53 L367.50,451.61 L368.79,449.46 L369.91,447.14 L370.84,444.73 L371.54,442.29 L372.00,439.90 L372.21,437.63 L362.01,433.35 L361.80,435.62 L361.34,438.01 L360.64,440.45 L359.71,442.86 L358.59,445.18 L357.30,447.33 L355.90,449.25 L354.42,450.87 L352.91,452.16 L351.41,453.06 L349.97,453.56 L348.63,453.64 L347.43,453.29 L346.42,452.52 L345.61,451.37 L345.04,449.86 L344.72,448.04 L344.66,445.96Z" fill="url(#gs3b)" stroke="none" stroke-width="1.5" stroke-linejoin="round" stroke-linecap="round" />
<path d="M363.06,402.35 L363.01,400.28 L362.69,398.46 L362.11,396.95 L361.31,395.79 L360.29,395.03 L359.09,394.68 L357.76,394.75 L356.31,395.25 L354.81,396.16 L353.30,397.44 L351.82,399.07 L350.42,400.99 L349.14,403.14 L348.02,405.45 L347.09,407.87 L346.38,410.31 L345.92,412.70 L345.71,414.96 L344.66,445.96 L344.72,448.04 L345.04,449.86 L345.61,451.37 L346.42,452.52 L347.43,453.29 L348.63,453.64 L349.97,453.56 L351.41,453.06 L352.91,452.16 L354.42,450.87 L355.90,449.25 L357.30,447.33 L358.59,445.18 L359.71,442.86 L360.64,440.45 L361.34,438.01 L361.80,435.62 L362.01,433.35Z" fill="#fff" stroke="#ff1616" stroke-width="1.5" stroke-linejoin="round" stroke-linecap="round" />
<path d="M373.26,406.63 L363.06,402.35" fill="none" stroke="#ff1616" stroke-width="1.1" stroke-linejoin="round" stroke-linecap="round" />
<path d="M372.21,437.63 L362.01,433.35" fill="none" stroke="#ff1616" stroke-width="1.1" stroke-linejoin="round" stroke-linecap="round" />
</g>
<path d="M378.65,248.23 L378.59,246.16 L378.27,244.34 L377.70,242.83 L376.89,241.67 L375.88,240.91 L374.68,240.56 L373.34,240.63 L371.90,241.13 L370.40,242.04 L368.89,243.32 L367.41,244.95 L366.01,246.87 L364.72,249.02 L363.60,251.33 L362.67,253.75 L361.97,256.19 L361.51,258.58 L361.30,260.84 L360.25,291.84 L360.30,293.92 L360.62,295.74 L361.20,297.25 L362.00,298.40 L363.02,299.17 L364.21,299.52 L365.55,299.44 L367.00,298.94 L368.50,298.04 L370.01,296.75 L371.49,295.13 L372.89,293.21 L374.17,291.06 L375.29,288.74 L376.22,286.33 L376.93,283.89 L377.39,281.50 L377.60,279.23Z" fill="#b3b7d1" stroke="none" stroke-width="1.5" stroke-linejoin="round" stroke-linecap="round" />
<g clip-path="url(#cgs4)">
<path d="M378.65,248.23 L378.59,246.16 L378.27,244.34 L377.70,242.83 L376.89,241.67 L375.88,240.91 L374.68,240.56 L373.34,240.63 L371.90,241.13 L370.40,242.04 L368.89,243.32 L367.41,244.95 L366.01,246.87 L364.72,249.02 L363.60,251.33 L362.67,253.75 L361.97,256.19 L361.51,258.58 L361.30,260.84 L351.10,256.56 L351.31,254.30 L351.77,251.91 L352.47,249.47 L353.40,247.05 L354.52,244.74 L355.81,242.59 L357.21,240.67 L358.69,239.04 L360.20,237.76 L361.70,236.85 L363.14,236.35 L364.48,236.28 L365.68,236.63 L366.69,237.39 L367.50,238.55 L368.07,240.06 L368.39,241.88 L368.45,243.95Z" fill="url(#gs4t)" stroke="none" stroke-width="1.5" stroke-linejoin="round" stroke-linecap="round" />
<path d="M360.25,291.84 L360.30,293.92 L360.62,295.74 L361.20,297.25 L362.00,298.40 L363.02,299.17 L364.21,299.52 L365.55,299.44 L367.00,298.94 L368.50,298.04 L370.01,296.75 L371.49,295.13 L372.89,293.21 L374.17,291.06 L375.29,288.74 L376.22,286.33 L376.93,283.89 L377.39,281.50 L377.60,279.23 L367.40,274.95 L367.19,277.22 L366.73,279.61 L366.02,282.05 L365.09,284.46 L363.97,286.78 L362.69,288.93 L361.29,290.85 L359.81,292.47 L358.30,293.76 L356.80,294.66 L355.35,295.16 L354.01,295.24 L352.82,294.89 L351.80,294.12 L351.00,292.97 L350.42,291.46 L350.10,289.64 L350.05,287.56Z" fill="url(#gs4b)" stroke="none" stroke-width="1.5" stroke-linejoin="round" stroke-linecap="round" />
<path d="M368.45,243.95 L368.39,241.88 L368.07,240.06 L367.50,238.55 L366.69,237.39 L365.68,236.63 L364.48,236.28 L363.14,236.35 L361.70,236.85 L360.20,237.76 L358.69,239.04 L357.21,240.67 L355.81,242.59 L354.52,244.74 L353.40,247.05 L352.47,249.47 L351.77,251.91 L351.31,254.30 L351.10,256.56 L350.05,287.56 L350.10,289.64 L350.42,291.46 L351.00,292.97 L351.80,294.12 L352.82,294.89 L354.01,295.24 L355.35,295.16 L356.80,294.66 L358.30,293.76 L359.81,292.47 L361.29,290.85 L362.69,288.93 L363.97,286.78 L365.09,284.46 L366.02,282.05 L366.73,279.61 L367.19,277.22 L367.40,274.95Z" fill="#fff" stroke="#ff1616" stroke-width="1.5" stroke-linejoin="round" stroke-linecap="round" />
<path d="M378.65,248.23 L368.45,243.95" fill="none" stroke="#ff1616" stroke-width="1.1" stroke-linejoin="round" stroke-linecap="round" />
<path d="M377.60,279.23 L367.40,274.95" fill="none" stroke="#ff1616" stroke-width="1.1" stroke-linejoin="round" stroke-linecap="round" />
</g>
<path d="M268.41,534.40 L275.94,312.90 L275.94,312.90 L276.00,311.84 L276.11,310.74 L276.26,309.62 L276.46,308.48 L276.70,307.33 L276.99,306.16 L277.32,304.99 L277.70,303.82 L278.11,302.65 L278.56,301.49 L279.05,300.35 L279.58,299.22 L280.13,298.12 L280.71,297.05 L281.33,296.01 L281.96,295.01 L282.62,294.05 L283.30,293.13 L283.99,292.27 L284.69,291.46 L285.41,290.71 L286.13,290.02 L286.86,289.39 L287.59,288.83 L375.03,225.26 L375.76,224.77 L376.48,224.34 L377.19,223.99 L377.89,223.72 L378.57,223.52 L379.24,223.39 L379.89,223.34 L380.51,223.37 L381.11,223.47 L381.68,223.65 L382.22,223.91 L382.72,224.24 L383.19,224.64 L383.63,225.12 L384.02,225.66 L384.38,226.27 L384.69,226.94 L384.95,227.68 L385.18,228.47 L385.35,229.32 L385.48,230.22 L385.57,231.17 L385.60,232.16 L385.59,233.19 L378.06,454.69ZM349.40,361.85 L349.36,357.81 L348.93,354.12 L348.13,350.83 L346.97,348.01 L345.48,345.71 L343.67,343.95 L341.58,342.78 L339.24,342.21 L336.70,342.25 L334.00,342.91 L331.17,344.16 L328.28,345.99 L325.38,348.38 L322.50,351.26 L319.70,354.61 L317.03,358.35 L314.54,362.44 L312.26,366.78 L310.24,371.32 L308.51,375.98 L307.10,380.66 L306.03,385.31 L305.32,389.82 L304.99,394.14 L305.04,398.18 L305.46,401.87 L306.26,405.16 L307.42,407.98 L308.92,410.28 L310.72,412.04 L312.81,413.21 L315.15,413.78 L317.69,413.74 L320.40,413.08 L323.22,411.83 L326.11,409.99 L329.02,407.61 L331.89,404.73 L334.69,401.38 L337.36,397.64 L339.85,393.55 L342.13,389.21 L344.15,384.67 L345.89,380.01 L347.30,375.33 L348.37,370.68 L349.07,366.17ZM294.15,464.14 L294.09,462.07 L293.77,460.25 L293.20,458.74 L292.39,457.59 L291.37,456.82 L290.18,456.47 L288.84,456.55 L287.40,457.05 L285.90,457.95 L284.39,459.24 L282.91,460.86 L281.50,462.78 L280.22,464.93 L279.10,467.25 L278.17,469.66 L277.47,472.10 L277.00,474.49 L276.80,476.76 L275.74,507.76 L275.80,509.83 L276.12,511.65 L276.69,513.16 L277.50,514.32 L278.52,515.08 L279.71,515.43 L281.05,515.35 L282.49,514.86 L283.99,513.95 L285.51,512.67 L286.99,511.04 L288.39,509.12 L289.67,506.97 L290.79,504.65 L291.72,502.24 L292.43,499.80 L292.89,497.41 L293.09,495.14ZM299.53,305.74 L299.48,303.67 L299.16,301.85 L298.58,300.34 L297.78,299.19 L296.76,298.42 L295.56,298.07 L294.22,298.15 L292.78,298.65 L291.28,299.55 L289.77,300.84 L288.29,302.46 L286.89,304.38 L285.61,306.53 L284.49,308.85 L283.56,311.26 L282.85,313.70 L282.39,316.09 L282.18,318.36 L281.13,349.36 L281.19,351.43 L281.51,353.25 L282.08,354.76 L282.89,355.92 L283.90,356.68 L285.10,357.03 L286.44,356.95 L287.88,356.46 L289.38,355.55 L290.89,354.27 L292.37,352.64 L293.77,350.72 L295.06,348.57 L296.18,346.25 L297.10,343.84 L297.81,341.40 L298.27,339.01 L298.48,336.74ZM373.26,406.63 L373.21,404.56 L372.89,402.74 L372.31,401.23 L371.51,400.07 L370.49,399.31 L369.29,398.96 L367.96,399.03 L366.51,399.53 L365.01,400.44 L363.50,401.72 L362.02,403.35 L360.62,405.27 L359.34,407.42 L358.22,409.73 L357.29,412.15 L356.58,414.59 L356.12,416.98 L355.91,419.24 L354.86,450.24 L354.92,452.32 L355.24,454.14 L355.81,455.65 L356.62,456.80 L357.63,457.57 L358.83,457.92 L360.17,457.84 L361.61,457.34 L363.11,456.44 L364.62,455.15 L366.10,453.53 L367.50,451.61 L368.79,449.46 L369.91,447.14 L370.84,444.73 L371.54,442.29 L372.00,439.90 L372.21,437.63ZM378.65,248.23 L378.59,246.16 L378.27,244.34 L377.70,242.83 L376.89,241.67 L375.88,240.91 L374.68,240.56 L373.34,240.63 L371.90,241.13 L370.40,242.04 L368.89,243.32 L367.41,244.95 L366.01,246.87 L364.72,249.02 L363.60,251.33 L362.67,253.75 L361.97,256.19 L361.51,258.58 L361.30,260.84 L360.25,291.84 L360.30,293.92 L360.62,295.74 L361.20,297.25 L362.00,298.40 L363.02,299.17 L364.21,299.52 L365.55,299.44 L367.00,298.94 L368.50,298.04 L370.01,296.75 L371.49,295.13 L372.89,293.21 L374.17,291.06 L375.29,288.74 L376.22,286.33 L376.93,283.89 L377.39,281.50 L377.60,279.23Z" fill="#6e7185" stroke="none" stroke-width="1.5" stroke-linejoin="round" stroke-linecap="round" fill-rule="evenodd"/>
<path d="M268.41,534.40 L275.94,312.90 L275.94,312.90 L276.00,311.84 L276.11,310.74 L276.26,309.62 L276.46,308.48 L276.70,307.33 L276.99,306.16 L277.32,304.99 L277.70,303.82 L278.11,302.65 L278.56,301.49 L279.05,300.35 L279.58,299.22 L280.13,298.12 L280.71,297.05 L281.33,296.01 L281.96,295.01 L282.62,294.05 L283.30,293.13 L283.99,292.27 L284.69,291.46 L285.41,290.71 L286.13,290.02 L286.86,289.39 L287.59,288.83 L375.03,225.26 L375.76,224.77 L376.48,224.34 L377.19,223.99 L377.89,223.72 L378.57,223.52 L379.24,223.39 L379.89,223.34 L380.51,223.37 L381.11,223.47 L381.68,223.65 L382.22,223.91 L382.72,224.24 L383.19,224.64 L383.63,225.12 L384.02,225.66 L384.38,226.27 L384.69,226.94 L384.95,227.68 L385.18,228.47 L385.35,229.32 L385.48,230.22 L385.57,231.17 L385.60,232.16 L385.59,233.19 L378.06,454.69Z" fill="none" stroke="#ff1616" stroke-width="1.5" stroke-linejoin="round" stroke-linecap="round" />
<path d="M349.40,361.85 L349.36,357.81 L348.93,354.12 L348.13,350.83 L346.97,348.01 L345.48,345.71 L343.67,343.95 L341.58,342.78 L339.24,342.21 L336.70,342.25 L334.00,342.91 L331.17,344.16 L328.28,345.99 L325.38,348.38 L322.50,351.26 L319.70,354.61 L317.03,358.35 L314.54,362.44 L312.26,366.78 L310.24,371.32 L308.51,375.98 L307.10,380.66 L306.03,385.31 L305.32,389.82 L304.99,394.14 L305.04,398.18 L305.46,401.87 L306.26,405.16 L307.42,407.98 L308.92,410.28 L310.72,412.04 L312.81,413.21 L315.15,413.78 L317.69,413.74 L320.40,413.08 L323.22,411.83 L326.11,409.99 L329.02,407.61 L331.89,404.73 L334.69,401.38 L337.36,397.64 L339.85,393.55 L342.13,389.21 L344.15,384.67 L345.89,380.01 L347.30,375.33 L348.37,370.68 L349.07,366.17Z" fill="none" stroke="#ff1616" stroke-width="1.5" stroke-linejoin="round" stroke-linecap="round" />
<path d="M294.15,464.14 L294.09,462.07 L293.77,460.25 L293.20,458.74 L292.39,457.59 L291.37,456.82 L290.18,456.47 L288.84,456.55 L287.40,457.05 L285.90,457.95 L284.39,459.24 L282.91,460.86 L281.50,462.78 L280.22,464.93 L279.10,467.25 L278.17,469.66 L277.47,472.10 L277.00,474.49 L276.80,476.76 L275.74,507.76 L275.80,509.83 L276.12,511.65 L276.69,513.16 L277.50,514.32 L278.52,515.08 L279.71,515.43 L281.05,515.35 L282.49,514.86 L283.99,513.95 L285.51,512.67 L286.99,511.04 L288.39,509.12 L289.67,506.97 L290.79,504.65 L291.72,502.24 L292.43,499.80 L292.89,497.41 L293.09,495.14Z" fill="none" stroke="#ff1616" stroke-width="1.5" stroke-linejoin="round" stroke-linecap="round" />
<path d="M299.53,305.74 L299.48,303.67 L299.16,301.85 L298.58,300.34 L297.78,299.19 L296.76,298.42 L295.56,298.07 L294.22,298.15 L292.78,298.65 L291.28,299.55 L289.77,300.84 L288.29,302.46 L286.89,304.38 L285.61,306.53 L284.49,308.85 L283.56,311.26 L282.85,313.70 L282.39,316.09 L282.18,318.36 L281.13,349.36 L281.19,351.43 L281.51,353.25 L282.08,354.76 L282.89,355.92 L283.90,356.68 L285.10,357.03 L286.44,356.95 L287.88,356.46 L289.38,355.55 L290.89,354.27 L292.37,352.64 L293.77,350.72 L295.06,348.57 L296.18,346.25 L297.10,343.84 L297.81,341.40 L298.27,339.01 L298.48,336.74Z" fill="none" stroke="#ff1616" stroke-width="1.5" stroke-linejoin="round" stroke-linecap="round" />
<path d="M373.26,406.63 L373.21,404.56 L372.89,402.74 L372.31,401.23 L371.51,400.07 L370.49,399.31 L369.29,398.96 L367.96,399.03 L366.51,399.53 L365.01,400.44 L363.50,401.72 L362.02,403.35 L360.62,405.27 L359.34,407.42 L358.22,409.73 L357.29,412.15 L356.58,414.59 L356.12,416.98 L355.91,419.24 L354.86,450.24 L354.92,452.32 L355.24,454.14 L355.81,455.65 L356.62,456.80 L357.63,457.57 L358.83,457.92 L360.17,457.84 L361.61,457.34 L363.11,456.44 L364.62,455.15 L366.10,453.53 L367.50,451.61 L368.79,449.46 L369.91,447.14 L370.84,444.73 L371.54,442.29 L372.00,439.90 L372.21,437.63Z" fill="none" stroke="#ff1616" stroke-width="1.5" stroke-linejoin="round" stroke-linecap="round" />
<path d="M378.65,248.23 L378.59,246.16 L378.27,244.34 L377.70,242.83 L376.89,241.67 L375.88,240.91 L374.68,240.56 L373.34,240.63 L371.90,241.13 L370.40,242.04 L368.89,243.32 L367.41,244.95 L366.01,246.87 L364.72,249.02 L363.60,251.33 L362.67,253.75 L361.97,256.19 L361.51,258.58 L361.30,260.84 L360.25,291.84 L360.30,293.92 L360.62,295.74 L361.20,297.25 L362.00,298.40 L363.02,299.17 L364.21,299.52 L365.55,299.44 L367.00,298.94 L368.50,298.04 L370.01,296.75 L371.49,295.13 L372.89,293.21 L374.17,291.06 L375.29,288.74 L376.22,286.33 L376.93,283.89 L377.39,281.50 L377.60,279.23Z" fill="none" stroke="#ff1616" stroke-width="1.5" stroke-linejoin="round" stroke-linecap="round" />
<path d="M258.21,530.12 L265.74,308.62 L265.74,308.62 L265.80,307.56 L265.91,306.46 L266.06,305.34 L266.26,304.20 L266.50,303.05 L266.79,301.88 L267.12,300.71 L267.50,299.54 L267.91,298.37 L268.36,297.21 L268.85,296.07 L269.38,294.94 L269.93,293.84 L270.51,292.77 L271.13,291.73 L271.76,290.73 L272.42,289.77 L273.10,288.85 L273.79,287.99 L274.49,287.18 L275.21,286.43 L275.93,285.74 L276.66,285.11 L277.39,284.55 L364.83,220.98 L365.14,220.76 L365.45,220.56 L365.75,220.37 L366.06,220.19 L366.36,220.02 L366.66,219.87 L366.96,219.73 L367.26,219.60 L367.55,219.48 L367.85,219.38 L368.14,219.30 L368.43,219.22 L368.71,219.16 L368.99,219.12 L369.27,219.08 L369.54,219.07 L369.81,219.06 L370.08,219.07 L370.34,219.09 L370.59,219.13 L370.84,219.18 L371.09,219.24 L371.33,219.32 L371.57,219.41" fill="none" stroke="#ff1616" stroke-width="1.5" stroke-linejoin="round" stroke-linecap="round" />
<path d="M265.74,308.62 L275.94,312.90" fill="none" stroke="#ff1616" stroke-width="1.0" stroke-linejoin="round" stroke-linecap="round" />
<path d="M277.39,284.55 L287.59,288.83" fill="none" stroke="#ff1616" stroke-width="1.0" stroke-linejoin="round" stroke-linecap="round" />
<path d="M364.83,220.98 L375.03,225.26" fill="none" stroke="#ff1616" stroke-width="1.0" stroke-linejoin="round" stroke-linecap="round" />
<path d="M371.57,219.41 L381.77,223.69" fill="none" stroke="#ff1616" stroke-width="1.5" stroke-linejoin="round" stroke-linecap="round" />
<path d="M385.64,231.69 L381.44,231.29" fill="none" stroke="#ff1616" stroke-width="1.0" stroke-linejoin="round" stroke-linecap="round" />
<path d="M280.24,551.54 L389.89,471.82" fill="none" stroke="#ff1616" stroke-width="1.5" stroke-linejoin="round" stroke-linecap="round" />
<path d="M378.06,454.69 L378.06,455.48 L378.11,456.30 L378.22,457.13 L378.37,457.97 L378.58,458.82 L378.84,459.67 L379.14,460.53 L379.50,461.38 L379.90,462.22 L380.34,463.06 L380.83,463.88 L381.36,464.68 L381.92,465.46 L382.53,466.22 L383.16,466.95 L383.83,467.65 L384.52,468.32 L385.24,468.95 L385.98,469.54 L386.74,470.09 L387.51,470.59 L388.30,471.05 L389.09,471.46 L389.89,471.82" fill="none" stroke="#ff1616" stroke-width="1.5" stroke-linejoin="round" stroke-linecap="round" />
<path d="M275.94,312.90 L268.41,534.40 L268.41,534.40 L268.41,535.20 L268.46,536.01 L268.56,536.84 L268.72,537.68 L268.93,538.53 L269.18,539.38 L269.49,540.24 L269.84,541.09 L270.24,541.93 L270.69,542.77 L271.18,543.59 L271.70,544.39 L272.27,545.17 L272.87,545.93 L273.51,546.66 L274.17,547.36 L274.87,548.03 L275.59,548.66 L276.33,549.25 L277.09,549.80 L277.86,550.30 L278.65,550.76 L279.44,551.17 L280.24,551.54 L563.49,670.39 L563.49,670.39 L564.30,670.70 L565.10,670.96 L565.89,671.16 L566.68,671.31 L567.45,671.41 L568.21,671.44 L568.95,671.43 L569.67,671.35 L570.36,671.22 L571.03,671.04 L571.67,670.80 L572.27,670.51 L572.84,670.17 L573.36,669.77 L573.85,669.33 L574.30,668.84 L574.70,668.31 L575.05,667.73 L575.36,667.11 L575.62,666.46 L575.83,665.77 L575.98,665.05 L576.09,664.30 L576.14,663.53 L579.63,560.93" fill="none" stroke="#ff1616" stroke-width="1.5" stroke-linejoin="round" stroke-linecap="round" />
<path d="M265.74,308.62 L258.21,530.12 L258.21,530.12 L258.21,531.58 L258.30,533.07 L258.49,534.59 L258.78,536.13 L259.16,537.69 L259.63,539.26 L260.19,540.82 L260.84,542.38 L261.57,543.93 L262.39,545.46 L263.28,546.96 L264.25,548.43 L265.29,549.87 L266.39,551.26 L267.56,552.60 L268.78,553.88 L270.05,555.10 L271.37,556.26 L272.73,557.34 L274.12,558.35 L275.54,559.28 L276.98,560.12 L278.43,560.87 L279.90,561.54 L563.15,680.39 L563.15,680.39 L564.62,680.96 L566.09,681.43 L567.55,681.81 L568.99,682.08 L570.41,682.25 L571.80,682.32 L573.16,682.29 L574.47,682.15 L575.75,681.92 L576.97,681.58 L578.14,681.14 L579.24,680.61 L580.28,679.98 L581.25,679.25 L582.14,678.44 L582.96,677.55 L583.70,676.57 L584.35,675.51 L584.91,674.38 L585.38,673.18 L585.76,671.92 L586.05,670.60 L586.25,669.23 L586.34,667.81 L589.83,565.21" fill="none" stroke="#ff1616" stroke-width="1.5" stroke-linejoin="round" stroke-linecap="round" />
<path d="M389.89,471.82 L673.15,590.68" fill="none" stroke="#ff1616" stroke-width="1.5" stroke-linejoin="round" stroke-linecap="round" />
<path d="M441.69,525.39 L438.08,523.99 L434.28,522.76 L430.33,521.69 L426.26,520.81 L422.10,520.11 L417.87,519.61 L413.63,519.30 L409.38,519.18 L405.17,519.27 L401.04,519.56 L397.00,520.04 L393.09,520.71 L389.35,521.57 L385.79,522.61 L382.46,523.83 L379.36,525.21 L376.53,526.74 L373.99,528.41 L371.75,530.21 L369.84,532.13 L368.27,534.14 L367.04,536.25 L366.18,538.42 L365.68,540.64 L365.55,542.90 L365.79,545.18 L366.41,547.45 L367.38,549.72 L368.71,551.94 L370.39,554.12 L372.41,556.23 L374.74,558.26 L377.37,560.19 L380.29,562.01 L383.46,563.70 L386.87,565.24 L519.06,620.71 L522.67,622.11 L526.47,623.35 L530.42,624.41 L534.49,625.29 L538.65,625.99 L542.88,626.50 L547.12,626.81 L551.37,626.92 L555.58,626.83 L559.71,626.55 L563.75,626.06 L567.66,625.39 L571.40,624.53 L574.96,623.49 L578.29,622.27 L581.39,620.90 L584.22,619.36 L586.76,617.69 L589.00,615.89 L590.91,613.97 L592.48,611.96 L593.71,609.86 L594.57,607.69 L595.07,605.46 L595.20,603.20 L594.96,600.93 L594.34,598.65 L593.37,596.39 L592.04,594.16 L590.36,591.98 L588.34,589.87 L586.01,587.84 L583.38,585.91 L580.46,584.10 L577.29,582.41 L573.88,580.86Z" fill="none" stroke="#ff1616" stroke-width="1.5" stroke-linejoin="round" stroke-linecap="round" />
<path d="M441.69,525.39 L441.35,535.39" fill="none" stroke="#ff1616" stroke-width="1.0" stroke-linejoin="round" stroke-linecap="round" />
<path d="M573.88,580.86 L573.54,590.86" fill="none" stroke="#ff1616" stroke-width="1.0" stroke-linejoin="round" stroke-linecap="round" />
<path d="M386.87,565.24 L386.47,568.44" fill="none" stroke="#ff1616" stroke-width="1.0" stroke-linejoin="round" stroke-linecap="round" />
<path d="M519.06,620.71 L518.66,623.91" fill="none" stroke="#ff1616" stroke-width="1.0" stroke-linejoin="round" stroke-linecap="round" />
<path d="M576.14,663.53 L579.63,560.93 L579.69,559.86 L579.80,558.77 L579.95,557.65 L580.15,556.51 L580.39,555.36 L580.68,554.19 L581.02,553.02 L581.39,551.85 L581.80,550.68 L582.26,549.52 L582.75,548.38 L583.27,547.25 L583.82,546.15 L584.41,545.08 L585.02,544.04 L585.65,543.03 L586.31,542.08 L586.99,541.16 L587.68,540.30 L588.39,539.49 L589.10,538.74 L589.82,538.05 L590.55,537.42 L591.28,536.86 L678.72,473.29 L679.45,472.80 L680.17,472.37 L680.88,472.02 L681.58,471.75 L682.26,471.54 L682.93,471.42 L683.58,471.37 L684.20,471.40 L684.80,471.50 L685.37,471.68 L695.57,475.96 L696.11,476.22 L696.62,476.55 L697.09,476.95 L697.52,477.42 L697.91,477.97 L698.27,478.58 L698.58,479.25 L698.85,479.99 L699.07,480.78 L699.25,481.63 L699.38,482.53 L699.46,483.48 L699.49,484.47 L699.48,485.50 L695.99,588.10 L586.34,667.81Z" fill="#adb1cb" stroke="#adb1cb" stroke-width="0.6" stroke-linejoin="round" stroke-linecap="round" />
<path d="M579.63,560.93 L579.69,559.86 L579.80,558.77 L579.95,557.65 L580.15,556.51 L580.39,555.36 L580.68,554.19 L581.02,553.02 L581.39,551.85 L581.80,550.68 L582.26,549.52 L582.74,548.37 L583.27,547.25 L583.82,546.15 L584.41,545.08 L585.02,544.04 L585.65,543.04 L586.31,542.08 L586.99,541.16 L587.68,540.30 L588.39,539.49 L589.10,538.74 L589.82,538.05 L590.55,537.42 L591.28,536.86 L601.48,541.14 L600.75,541.70 L600.02,542.33 L599.30,543.02 L598.59,543.77 L597.88,544.58 L597.19,545.44 L596.51,546.36 L595.85,547.32 L595.22,548.32 L594.61,549.36 L594.02,550.43 L593.47,551.53 L592.94,552.65 L592.46,553.80 L592.00,554.96 L591.59,556.13 L591.22,557.30 L590.88,558.47 L590.59,559.64 L590.35,560.79 L590.15,561.93 L590.00,563.05 L589.89,564.14 L589.83,565.21Z" fill="url(#gCorner2)" stroke="none" stroke-width="1.5" stroke-linejoin="round" stroke-linecap="round" />
<path d="M586.34,667.81 L585.87,671.48 L584.73,674.76 L582.96,677.55 L581.62,678.94 L691.27,599.23 L692.61,597.84 L694.38,595.05 L695.52,591.77 L695.99,588.10Z" fill="url(#gUnderL)" stroke="none" stroke-width="1.5" stroke-linejoin="round" stroke-linecap="round" />
<path d="M586.34,667.81 L585.87,671.48 L584.73,674.76 L582.96,677.55 L581.62,678.94 L691.27,599.23 L692.61,597.84 L694.38,595.05 L695.52,591.77 L695.99,588.10Z" fill="url(#gUnder)" stroke="none" stroke-width="1.5" stroke-linejoin="round" stroke-linecap="round" />
<path d="M695.99,588.10 L695.52,591.77 L694.38,595.05 L692.61,597.84 L691.27,599.23" fill="none" stroke="#ff1616" stroke-width="1.5" stroke-linejoin="round" stroke-linecap="round" />
<path d="M581.62,678.94 L691.27,599.23" fill="none" stroke="#ff1616" stroke-width="1.5" stroke-linejoin="round" stroke-linecap="round" />
<path d="M617.26,554.63 L617.21,553.14 L616.95,551.87 L616.48,550.86 L615.83,550.15 L615.02,549.77 L614.09,549.73 L613.06,550.03 L611.98,550.66 L610.90,551.60 L609.84,552.82 L608.85,554.25 L607.98,555.86 L607.25,557.57 L606.69,559.33 L606.32,561.06 L606.16,562.70 L606.21,564.18 L606.48,565.45 L606.94,566.46 L607.59,567.17 L608.40,567.56 L609.34,567.60 L610.36,567.30 L611.44,566.66 L612.53,565.72 L613.59,564.51 L614.57,563.07 L615.45,561.47 L616.18,559.75 L616.74,558.00 L617.10,556.27Z" fill="url(#gsh0)" stroke="none" stroke-width="1.5" stroke-linejoin="round" stroke-linecap="round" />
<g clip-path="url(#cgsh0)">
<path d="M607.06,550.35 L607.01,548.86 L606.75,547.59 L606.28,546.58 L605.63,545.87 L604.82,545.49 L603.89,545.45 L602.86,545.75 L601.78,546.38 L600.70,547.32 L599.64,548.54 L598.65,549.97 L597.78,551.58 L597.05,553.29 L596.49,555.05 L596.12,556.78 L595.96,558.42 L596.01,559.90 L596.28,561.17 L596.74,562.18 L597.39,562.89 L598.20,563.28 L599.14,563.32 L600.16,563.02 L601.24,562.38 L602.33,561.44 L603.39,560.23 L604.37,558.79 L605.25,557.19 L605.98,555.47 L606.54,553.72 L606.90,551.99Z" fill="#fff" stroke="#ff1616" stroke-width="1.5" stroke-linejoin="round" stroke-linecap="round" />
</g>
<path d="M649.35,566.41 L649.30,564.93 L649.03,563.66 L648.57,562.65 L647.92,561.94 L647.11,561.55 L646.18,561.51 L645.15,561.81 L644.07,562.45 L642.98,563.39 L641.93,564.60 L640.94,566.04 L640.07,567.64 L639.33,569.36 L638.77,571.11 L638.41,572.85 L638.25,574.48 L638.30,575.97 L638.57,577.24 L639.03,578.25 L639.68,578.96 L640.49,579.34 L641.42,579.38 L642.45,579.08 L643.53,578.45 L644.62,577.51 L645.67,576.29 L646.66,574.86 L647.53,573.25 L648.27,571.54 L648.83,569.78 L649.19,568.05Z" fill="url(#gsh1)" stroke="none" stroke-width="1.5" stroke-linejoin="round" stroke-linecap="round" />
<g clip-path="url(#cgsh1)">
<path d="M639.15,562.13 L639.10,560.65 L638.83,559.38 L638.37,558.37 L637.72,557.66 L636.91,557.27 L635.98,557.23 L634.95,557.53 L633.87,558.17 L632.78,559.11 L631.73,560.32 L630.74,561.76 L629.87,563.36 L629.13,565.08 L628.57,566.83 L628.21,568.57 L628.05,570.20 L628.10,571.69 L628.37,572.96 L628.83,573.97 L629.48,574.68 L630.29,575.06 L631.22,575.10 L632.25,574.80 L633.33,574.17 L634.42,573.23 L635.47,572.01 L636.46,570.58 L637.33,568.97 L638.07,567.26 L638.63,565.50 L638.99,563.77Z" fill="#fff" stroke="#ff1616" stroke-width="1.5" stroke-linejoin="round" stroke-linecap="round" />
</g>
<path d="M681.44,578.20 L681.39,576.71 L681.12,575.44 L680.66,574.43 L680.01,573.72 L679.20,573.34 L678.26,573.30 L677.24,573.60 L676.16,574.23 L675.07,575.17 L674.01,576.39 L673.03,577.82 L672.15,579.43 L671.42,581.14 L670.86,582.90 L670.50,584.63 L670.34,586.27 L670.39,587.75 L670.65,589.02 L671.12,590.03 L671.77,590.74 L672.58,591.13 L673.51,591.17 L674.54,590.87 L675.62,590.23 L676.70,589.29 L677.76,588.08 L678.75,586.64 L679.62,585.03 L680.35,583.32 L680.91,581.56 L681.28,579.83Z" fill="url(#gsh2)" stroke="none" stroke-width="1.5" stroke-linejoin="round" stroke-linecap="round" />
<g clip-path="url(#cgsh2)">
<path d="M671.24,573.92 L671.19,572.43 L670.92,571.16 L670.46,570.15 L669.81,569.44 L669.00,569.06 L668.06,569.02 L667.04,569.32 L665.96,569.95 L664.87,570.89 L663.81,572.11 L662.83,573.54 L661.95,575.15 L661.22,576.86 L660.66,578.62 L660.30,580.35 L660.14,581.99 L660.19,583.47 L660.45,584.74 L660.92,585.75 L661.57,586.46 L662.38,586.85 L663.31,586.89 L664.34,586.59 L665.42,585.95 L666.50,585.01 L667.56,583.80 L668.55,582.36 L669.42,580.75 L670.15,579.04 L670.71,577.28 L671.08,575.55Z" fill="#fff" stroke="#ff1616" stroke-width="1.5" stroke-linejoin="round" stroke-linecap="round" />
</g>
<path d="M614.12,627.13 L614.07,625.65 L613.80,624.38 L613.34,623.37 L612.69,622.66 L611.88,622.27 L610.95,622.23 L609.92,622.53 L608.84,623.17 L607.75,624.11 L606.70,625.32 L605.71,626.76 L604.84,628.37 L604.10,630.08 L603.54,631.84 L603.18,633.57 L603.02,635.20 L603.07,636.69 L603.34,637.96 L603.80,638.97 L604.45,639.68 L605.26,640.06 L606.19,640.10 L607.22,639.80 L608.30,639.17 L609.39,638.23 L610.44,637.01 L611.43,635.58 L612.30,633.97 L613.04,632.26 L613.60,630.50 L613.96,628.77Z" fill="url(#gsh3)" stroke="none" stroke-width="1.5" stroke-linejoin="round" stroke-linecap="round" />
<g clip-path="url(#cgsh3)">
<path d="M603.92,622.85 L603.87,621.37 L603.60,620.10 L603.14,619.09 L602.49,618.38 L601.68,617.99 L600.75,617.95 L599.72,618.25 L598.64,618.89 L597.55,619.83 L596.50,621.04 L595.51,622.48 L594.64,624.09 L593.90,625.80 L593.34,627.56 L592.98,629.29 L592.82,630.92 L592.87,632.41 L593.14,633.68 L593.60,634.69 L594.25,635.40 L595.06,635.78 L595.99,635.82 L597.02,635.52 L598.10,634.89 L599.19,633.95 L600.24,632.73 L601.23,631.30 L602.10,629.69 L602.84,627.98 L603.40,626.22 L603.76,624.49Z" fill="#fff" stroke="#ff1616" stroke-width="1.5" stroke-linejoin="round" stroke-linecap="round" />
</g>
<path d="M586.34,667.81 L589.83,565.21 L589.83,565.21 L589.89,564.14 L590.00,563.05 L590.15,561.93 L590.35,560.79 L590.59,559.64 L590.88,558.47 L591.22,557.30 L591.59,556.13 L592.00,554.96 L592.46,553.80 L592.94,552.65 L593.47,551.53 L594.02,550.43 L594.61,549.36 L595.22,548.32 L595.85,547.32 L596.51,546.36 L597.19,545.44 L597.88,544.58 L598.59,543.77 L599.30,543.02 L600.02,542.33 L600.75,541.70 L601.48,541.14 L688.92,477.57 L689.65,477.07 L690.37,476.65 L691.08,476.30 L691.78,476.02 L692.46,475.82 L693.13,475.70 L693.78,475.65 L694.40,475.68 L695.00,475.78 L695.57,475.96 L696.11,476.22 L696.61,476.55 L697.09,476.95 L697.52,477.42 L697.91,477.97 L698.27,478.58 L698.58,479.25 L698.85,479.99 L699.07,480.78 L699.24,481.63 L699.38,482.53 L699.46,483.48 L699.49,484.47 L699.48,485.50 L695.99,588.10ZM617.26,554.63 L617.21,553.14 L616.95,551.87 L616.48,550.86 L615.83,550.15 L615.02,549.77 L614.09,549.73 L613.06,550.03 L611.98,550.66 L610.90,551.60 L609.84,552.82 L608.85,554.25 L607.98,555.86 L607.25,557.57 L606.69,559.33 L606.32,561.06 L606.16,562.70 L606.21,564.18 L606.48,565.45 L606.94,566.46 L607.59,567.17 L608.40,567.56 L609.34,567.60 L610.36,567.30 L611.44,566.66 L612.53,565.72 L613.59,564.51 L614.57,563.07 L615.45,561.47 L616.18,559.75 L616.74,558.00 L617.10,556.27ZM649.35,566.41 L649.30,564.93 L649.03,563.66 L648.57,562.65 L647.92,561.94 L647.11,561.55 L646.18,561.51 L645.15,561.81 L644.07,562.45 L642.98,563.39 L641.93,564.60 L640.94,566.04 L640.07,567.64 L639.33,569.36 L638.77,571.11 L638.41,572.85 L638.25,574.48 L638.30,575.97 L638.57,577.24 L639.03,578.25 L639.68,578.96 L640.49,579.34 L641.42,579.38 L642.45,579.08 L643.53,578.45 L644.62,577.51 L645.67,576.29 L646.66,574.86 L647.53,573.25 L648.27,571.54 L648.83,569.78 L649.19,568.05ZM681.44,578.20 L681.39,576.71 L681.12,575.44 L680.66,574.43 L680.01,573.72 L679.20,573.34 L678.26,573.30 L677.24,573.60 L676.16,574.23 L675.07,575.17 L674.01,576.39 L673.03,577.82 L672.15,579.43 L671.42,581.14 L670.86,582.90 L670.50,584.63 L670.34,586.27 L670.39,587.75 L670.65,589.02 L671.12,590.03 L671.77,590.74 L672.58,591.13 L673.51,591.17 L674.54,590.87 L675.62,590.23 L676.70,589.29 L677.76,588.08 L678.75,586.64 L679.62,585.03 L680.35,583.32 L680.91,581.56 L681.28,579.83ZM614.12,627.13 L614.07,625.65 L613.80,624.38 L613.34,623.37 L612.69,622.66 L611.88,622.27 L610.95,622.23 L609.92,622.53 L608.84,623.17 L607.75,624.11 L606.70,625.32 L605.71,626.76 L604.84,628.37 L604.10,630.08 L603.54,631.84 L603.18,633.57 L603.02,635.20 L603.07,636.69 L603.34,637.96 L603.80,638.97 L604.45,639.68 L605.26,640.06 L606.19,640.10 L607.22,639.80 L608.30,639.17 L609.39,638.23 L610.44,637.01 L611.43,635.58 L612.30,633.97 L613.04,632.26 L613.60,630.50 L613.96,628.77Z" fill="#6e7185" stroke="none" stroke-width="1.5" stroke-linejoin="round" stroke-linecap="round" fill-rule="evenodd"/>
<path d="M601.48,541.14 L601.56,540.11 L601.74,539.13 L602.00,538.20 L602.36,537.34 L602.80,536.55 L603.32,535.82 L603.93,535.18 L604.60,534.62 L692.05,471.06 L691.37,471.61 L690.77,472.26 L690.24,472.98 L689.80,473.77 L689.45,474.64 L689.18,475.56 L689.00,476.54 L688.92,477.57Z" fill="#55586a" stroke="none" stroke-width="1.5" stroke-linejoin="round" stroke-linecap="round" />
<path d="M586.34,667.81 L589.83,565.21 L589.83,565.21 L589.89,564.14 L590.00,563.05 L590.15,561.93 L590.35,560.79 L590.59,559.64 L590.88,558.47 L591.22,557.30 L591.59,556.13 L592.00,554.96 L592.46,553.80 L592.94,552.65 L593.47,551.53 L594.02,550.43 L594.61,549.36 L595.22,548.32 L595.85,547.32 L596.51,546.36 L597.19,545.44 L597.88,544.58 L598.59,543.77 L599.30,543.02 L600.02,542.33 L600.75,541.70 L601.48,541.14 L688.92,477.57 L689.65,477.07 L690.37,476.65 L691.08,476.30 L691.78,476.02 L692.46,475.82 L693.13,475.70 L693.78,475.65 L694.40,475.68 L695.00,475.78 L695.57,475.96 L696.11,476.22 L696.61,476.55 L697.09,476.95 L697.52,477.42 L697.91,477.97 L698.27,478.58 L698.58,479.25 L698.85,479.99 L699.07,480.78 L699.24,481.63 L699.38,482.53 L699.46,483.48 L699.49,484.47 L699.48,485.50 L695.99,588.10Z" fill="none" stroke="#ff1616" stroke-width="1.5" stroke-linejoin="round" stroke-linecap="round" />
<path d="M617.26,554.63 L617.21,553.14 L616.95,551.87 L616.48,550.86 L615.83,550.15 L615.02,549.77 L614.09,549.73 L613.06,550.03 L611.98,550.66 L610.90,551.60 L609.84,552.82 L608.85,554.25 L607.98,555.86 L607.25,557.57 L606.69,559.33 L606.32,561.06 L606.16,562.70 L606.21,564.18 L606.48,565.45 L606.94,566.46 L607.59,567.17 L608.40,567.56 L609.34,567.60 L610.36,567.30 L611.44,566.66 L612.53,565.72 L613.59,564.51 L614.57,563.07 L615.45,561.47 L616.18,559.75 L616.74,558.00 L617.10,556.27Z" fill="none" stroke="#ff1616" stroke-width="1.5" stroke-linejoin="round" stroke-linecap="round" />
<path d="M649.35,566.41 L649.30,564.93 L649.03,563.66 L648.57,562.65 L647.92,561.94 L647.11,561.55 L646.18,561.51 L645.15,561.81 L644.07,562.45 L642.98,563.39 L641.93,564.60 L640.94,566.04 L640.07,567.64 L639.33,569.36 L638.77,571.11 L638.41,572.85 L638.25,574.48 L638.30,575.97 L638.57,577.24 L639.03,578.25 L639.68,578.96 L640.49,579.34 L641.42,579.38 L642.45,579.08 L643.53,578.45 L644.62,577.51 L645.67,576.29 L646.66,574.86 L647.53,573.25 L648.27,571.54 L648.83,569.78 L649.19,568.05Z" fill="none" stroke="#ff1616" stroke-width="1.5" stroke-linejoin="round" stroke-linecap="round" />
<path d="M681.44,578.20 L681.39,576.71 L681.12,575.44 L680.66,574.43 L680.01,573.72 L679.20,573.34 L678.26,573.30 L677.24,573.60 L676.16,574.23 L675.07,575.17 L674.01,576.39 L673.03,577.82 L672.15,579.43 L671.42,581.14 L670.86,582.90 L670.50,584.63 L670.34,586.27 L670.39,587.75 L670.65,589.02 L671.12,590.03 L671.77,590.74 L672.58,591.13 L673.51,591.17 L674.54,590.87 L675.62,590.23 L676.70,589.29 L677.76,588.08 L678.75,586.64 L679.62,585.03 L680.35,583.32 L680.91,581.56 L681.28,579.83Z" fill="none" stroke="#ff1616" stroke-width="1.5" stroke-linejoin="round" stroke-linecap="round" />
<path d="M614.12,627.13 L614.07,625.65 L613.80,624.38 L613.34,623.37 L612.69,622.66 L611.88,622.27 L610.95,622.23 L609.92,622.53 L608.84,623.17 L607.75,624.11 L606.70,625.32 L605.71,626.76 L604.84,628.37 L604.10,630.08 L603.54,631.84 L603.18,633.57 L603.02,635.20 L603.07,636.69 L603.34,637.96 L603.80,638.97 L604.45,639.68 L605.26,640.06 L606.19,640.10 L607.22,639.80 L608.30,639.17 L609.39,638.23 L610.44,637.01 L611.43,635.58 L612.30,633.97 L613.04,632.26 L613.60,630.50 L613.96,628.77Z" fill="none" stroke="#ff1616" stroke-width="1.5" stroke-linejoin="round" stroke-linecap="round" />
<path d="M576.14,663.53 L579.63,560.93 L579.63,560.93 L579.69,559.86 L579.80,558.77 L579.95,557.65 L580.15,556.51 L580.39,555.36 L580.68,554.19 L581.02,553.02 L581.39,551.85 L581.80,550.68 L582.26,549.52 L582.74,548.37 L583.27,547.25 L583.82,546.15 L584.41,545.08 L585.02,544.04 L585.65,543.04 L586.31,542.08 L586.99,541.16 L587.68,540.30 L588.39,539.49 L589.10,538.74 L589.82,538.05 L590.55,537.42 L591.28,536.86" fill="none" stroke="#ff1616" stroke-width="1.5" stroke-linejoin="round" stroke-linecap="round" />
<path d="M579.63,560.93 L589.83,565.21" fill="none" stroke="#ff1616" stroke-width="1.0" stroke-linejoin="round" stroke-linecap="round" />
<path d="M563.49,670.39 L564.30,670.70 L565.10,670.96 L565.89,671.16 L566.68,671.31 L567.45,671.41 L568.21,671.44 L568.95,671.43 L569.67,671.35 L570.36,671.22 L571.03,671.04 L571.67,670.80 L572.27,670.51 L572.84,670.17 L573.36,669.77 L573.85,669.33 L574.30,668.84 L574.70,668.31 L575.05,667.73 L575.36,667.11 L575.62,666.46 L575.83,665.77 L575.98,665.05 L576.09,664.30 L576.14,663.53" fill="none" stroke="#ff1616" stroke-width="1.0" stroke-linejoin="round" stroke-linecap="round" />
<path d="M563.31,675.89 L563.15,680.39" fill="none" stroke="#ff1616" stroke-width="1.0" stroke-linejoin="round" stroke-linecap="round" />
<path d="M596.96,524.96 L599.87,523.37 L603.15,522.51 L606.75,522.38 L610.56,522.97 L614.47,524.27 L701.91,460.70 L698.00,459.40 L694.19,458.81 L690.59,458.94 L687.31,459.80 L684.40,461.39Z" fill="url(#gBend3)" stroke="none" stroke-width="1.5" stroke-linejoin="round" stroke-linecap="round" />
<path d="M591.28,536.86 L591.43,534.97 L591.75,533.18 L592.24,531.48 L592.89,529.90 L593.70,528.44 L594.66,527.12 L595.77,525.94 L597.01,524.92 L598.38,524.06 L599.87,523.37 L601.46,522.85 L603.15,522.51 L604.91,522.35 L606.75,522.38 L608.63,522.58 L610.56,522.97 L612.51,523.53 L614.47,524.27 L614.13,534.27 L613.06,533.87 L611.99,533.56 L610.94,533.35 L609.92,533.24 L608.92,533.23 L607.95,533.31 L607.03,533.50 L606.16,533.78 L605.35,534.15 L604.60,534.62 L603.93,535.18 L603.32,535.82 L602.80,536.55 L602.36,537.34 L602.00,538.20 L601.74,539.13 L601.56,540.11 L601.48,541.14Z" fill="#adb1cb" stroke="#adb1cb" stroke-width="0.5" stroke-linejoin="round" stroke-linecap="round" />
<path d="M614.47,524.27 L713.71,565.92 L801.16,502.35 L701.91,460.70Z" fill="#adb1cb" stroke="#adb1cb" stroke-width="0.5" stroke-linejoin="round" stroke-linecap="round" />
<path d="M612.94,523.63 L713.71,565.92 L713.37,575.92 L612.60,533.63Z" fill="#adb1cb" stroke="#adb1cb" stroke-width="0.5" stroke-linejoin="round" stroke-linecap="round" />
<path d="M713.71,565.92 L801.16,502.35 L800.82,512.35 L713.37,575.92Z" fill="#71748a" stroke="none" stroke-width="1.5" stroke-linejoin="round" stroke-linecap="round" />
<path d="M591.28,536.86 L591.43,534.97 L591.75,533.18 L592.24,531.48 L592.89,529.90 L593.70,528.44 L594.66,527.12 L595.77,525.94 L597.01,524.92 L598.38,524.06 L599.87,523.37 L601.46,522.85 L603.15,522.51 L604.91,522.35 L606.75,522.38 L608.63,522.58 L610.56,522.97 L612.51,523.53 L614.47,524.27" fill="none" stroke="#ff1616" stroke-width="1.5" stroke-linejoin="round" stroke-linecap="round" />
<path d="M601.48,541.14 L601.56,540.11 L601.74,539.13 L602.00,538.20 L602.36,537.34 L602.80,536.55 L603.32,535.82 L603.93,535.18 L604.60,534.62 L605.35,534.15 L606.16,533.78 L607.03,533.50 L607.95,533.31 L608.92,533.23 L609.92,533.24 L610.94,533.35 L611.99,533.56 L613.06,533.87 L614.13,534.27" fill="none" stroke="#ff1616" stroke-width="1.5" stroke-linejoin="round" stroke-linecap="round" />
<path d="M591.28,536.86 L601.48,541.14" fill="none" stroke="#ff1616" stroke-width="1.1" stroke-linejoin="round" stroke-linecap="round" />
<path d="M596.96,524.96 L684.40,461.39" fill="none" stroke="#ff1616" stroke-width="1.5" stroke-linejoin="round" stroke-linecap="round" />
<path d="M684.40,461.39 L687.31,459.80 L690.59,458.94 L694.19,458.81 L698.00,459.40 L701.91,460.70" fill="none" stroke="#ff1616" stroke-width="1.5" stroke-linejoin="round" stroke-linecap="round" />
<path d="M614.47,524.27 L701.91,460.70" fill="none" stroke="#ff1616" stroke-width="1.5" stroke-linejoin="round" stroke-linecap="round" />
<path d="M614.47,524.27 L713.71,565.92 L801.16,502.35 L701.91,460.70Z" fill="none" stroke="#ff1616" stroke-width="1.5" stroke-linejoin="round" stroke-linecap="round" />
<path d="M614.47,524.27 L713.71,565.92 L713.37,575.92 L614.13,534.27" fill="none" stroke="#ff1616" stroke-width="1.5" stroke-linejoin="round" stroke-linecap="round" />
<path d="M713.71,565.92 L801.16,502.35 L800.82,512.35 L713.37,575.92Z" fill="none" stroke="#ff1616" stroke-width="1.5" stroke-linejoin="round" stroke-linecap="round" /></svg>
<div class="abs" style="left:0;top:109px;width:69.9px;height:690px;background:#ebebeb;border-radius:6px 6px 0 0;box-shadow:0 0 0 .6px #c2c2c2, 1px 3px 14px rgba(0,0,0,.24)"></div>
<svg class="abs" style="left:0;top:0" width="120" height="789" viewBox="0 0 120 789">
<defs>
<linearGradient id="gGreen" x1="0" y1="0" x2="0" y2="1"><stop offset="0" stop-color="#a2bd73"/><stop offset=".07" stop-color="#86a354"/><stop offset=".8" stop-color="#7d9b49"/><stop offset=".82" stop-color="#6c8a3b"/><stop offset="1" stop-color="#6f8e3e"/></linearGradient>
<linearGradient id="gTri" x1="0" y1="0" x2="1" y2="1"><stop offset="0" stop-color="#7fbf4a"/><stop offset="1" stop-color="#58a030"/></linearGradient>
<linearGradient id="gMag" x1="0" y1="0" x2="1" y2="0"><stop offset="0" stop-color="#d94a50"/><stop offset="1" stop-color="#f4b4b4"/></linearGradient>
<radialGradient id="gBall" cx=".38" cy=".32" r=".75"><stop offset="0" stop-color="#fff6b0"/><stop offset=".35" stop-color="#f0c840"/><stop offset=".75" stop-color="#b88818"/><stop offset="1" stop-color="#5a3c08"/></radialGradient>
<linearGradient id="gPink" x1="0" y1="0" x2="0" y2="1"><stop offset="0" stop-color="#e8a0a8" stop-opacity=".25"/><stop offset=".6" stop-color="#cf5a66" stop-opacity=".9"/><stop offset="1" stop-color="#c04a58"/></linearGradient>
<linearGradient id="gCubeL" x1="0" y1="0" x2="1" y2="1"><stop offset="0" stop-color="#a8a8a8"/><stop offset="1" stop-color="#5c5c5c"/></linearGradient>
</defs>
<circle cx="8.9" cy="118.4" r="4.3" fill="#d6d6d6" stroke="#c2c2c2" stroke-width=".8"/>
<rect x="0.8" y="128.4" width="69.4" height="32.6" fill="url(#gGreen)"/>
<g font-family="Liberation Sans" font-weight="bold" font-size="24.5" transform="translate(0,152.6)"><text x="0" y="0" transform="translate(5.2,0) scale(.78,1)" fill="#a9c384" stroke="#a9c384" stroke-width=".7">2D</text><text x="0" y="0" transform="translate(40.4,0) scale(.78,1)" fill="#fff" stroke="#fff" stroke-width=".7">3D</text></g>
<path d="M10.9 165.6 L10.9 185.8 L15.6 181.6 L19.6 190.8 L23.6 189 L19.7 180 L26 179.6 Z" fill="#111"/>
<path d="M45.2 166.6 L45.2 184.6 L49.4 180.8 L53.4 190 L56.6 188.6 L52.7 179.6 L58.4 179.2 Z" fill="#fff" stroke="#111" stroke-width="1.5" stroke-linejoin="miter"/>
<path d="M33.6 187.4 L33.6 193.0 L27.8 193.0 Z" fill="#6a6a6a"/>
<path d="M67.9 187.4 L67.9 193.0 L62.1 193.0 Z" fill="#6a6a6a"/>
<rect x="2" y="195.7" width="66.5" height="1.3" fill="#5a5a5a"/>
<path d="M18.1 209.8 V220.2 M12.9 215 H23.3" stroke="#111" stroke-width="2.9" stroke-linecap="round"/>
<circle cx="18.1" cy="215.0" r="1.9" fill="#e0202a"/>
<path d="M53.2 203.9 L65.3 215.5 L41.2 215.5 L44.1 226.9" fill="none" stroke="#111" stroke-width="1.7" stroke-linejoin="round"/>
<circle cx="53.2" cy="203.9" r="1.5" fill="#e0202a"/>
<circle cx="65.3" cy="215.5" r="1.5" fill="#e0202a"/>
<circle cx="41.2" cy="215.5" r="1.5" fill="#e0202a"/>
<circle cx="44.1" cy="226.9" r="1.5" fill="#e0202a"/>
<path d="M33.6 224.9 L33.6 230.5 L27.8 230.5 Z" fill="#6a6a6a"/>
<path d="M67.9 224.9 L67.9 230.5 L62.1 230.5 Z" fill="#6a6a6a"/>
<path d="M17.1 236.2 A11.4 11.4 0 1 1 7.6 254.6" fill="none" stroke="#111" stroke-width="2.2"/>
<circle cx="17.1" cy="236.2" r="1.7" fill="#e0202a"/>
<circle cx="17.1" cy="247.6" r="1.5" fill="#e0202a"/>
<circle cx="7.6" cy="254.6" r="1.7" fill="#e0202a"/>
<circle cx="52" cy="247.6" r="11.8" fill="none" stroke="#111" stroke-width="2.2"/>
<circle cx="40.2" cy="247.6" r="1.7" fill="#e0202a"/>
<circle cx="63.8" cy="247.6" r="1.7" fill="#e0202a"/>
<path d="M33.6 257.2 L33.6 262.8 L27.8 262.8 Z" fill="#6a6a6a"/>
<path d="M67.9 257.2 L67.9 262.8 L62.1 262.8 Z" fill="#6a6a6a"/>
<path d="M8.2 268.5 Q21.5 271 25.3 291.3" fill="none" stroke="#111" stroke-width="2.2"/>
<circle cx="8.2" cy="268.5" r="1.7" fill="#e0202a"/>
<circle cx="25.3" cy="291.3" r="1.7" fill="#e0202a"/>
<path d="M38.5 272.6 H65.4 V288" fill="none" stroke="#333" stroke-width=".9"/>
<ellipse cx="51.8" cy="280.2" rx="13.6" ry="7.7" fill="none" stroke="#111" stroke-width="2.2"/>
<circle cx="51.8" cy="280.2" r="1.5" fill="#e0202a"/>
<circle cx="64.9" cy="272.4" r="1.7" fill="#e0202a"/>
<path d="M33.6 289.8 L33.6 295.4 L27.8 295.4 Z" fill="#6a6a6a"/>
<path d="M67.9 289.8 L67.9 295.4 L62.1 295.4 Z" fill="#6a6a6a"/>
<rect x="7.2" y="301.4" width="21.7" height="22.2" fill="none" stroke="#111" stroke-width="2.2"/>
<circle cx="7.2" cy="301.4" r="1.7" fill="#e0202a"/>
<circle cx="28.9" cy="323.6" r="1.7" fill="#e0202a"/>
<path d="M39.5 323.6 C41 310 45 307.5 48.4 309.6 C52 312 53.5 318.5 57.6 317.4 C62 316 64.5 309 65 301.4" fill="none" stroke="#111" stroke-width="2.2"/>
<circle cx="39.5" cy="323.6" r="1.7" fill="#e0202a"/>
<circle cx="47.1" cy="309.2" r="1.7" fill="#e0202a"/>
<circle cx="56.8" cy="317.2" r="1.7" fill="#e0202a"/>
<circle cx="65.0" cy="301.4" r="1.7" fill="#e0202a"/>
<path d="M33.6 322.0 L33.6 327.6 L27.8 327.6 Z" fill="#6a6a6a"/>
<path d="M67.9 322.0 L67.9 327.6 L62.1 327.6 Z" fill="#6a6a6a"/>
<path d="M17.7 333.7 H29.4 V345.1" fill="none" stroke="#999" stroke-width="1"/>
<path d="M5.1 333.7 H17.7 A11.6 11.4 0 0 1 29.4 345.1 V356.5" fill="none" stroke="#111" stroke-width="2.2"/>
<circle cx="17.2" cy="333.7" r="1.7" fill="#e0202a"/>
<circle cx="29.4" cy="345.1" r="1.7" fill="#e0202a"/>
<circle cx="15.6" cy="345.6" r="0.9" fill="#e0202a"/>
<path d="M40.6 333.1 L66.5 358.4 M40.6 356.5 L53.2 343.9" stroke="#111" stroke-width="2.2" stroke-linecap="butt"/>
<path d="M53.2 343.9 L64.9 333.1" stroke="#e0202a" stroke-width="1.5"/>
<circle cx="58.7" cy="338.6" r="2.0" fill="#e0202a"/>
<path d="M33.6 354.0 L33.6 359.6 L27.8 359.6 Z" fill="#6a6a6a"/>
<path d="M67.9 354.0 L67.9 359.6 L62.1 359.6 Z" fill="#6a6a6a"/>
<text x="5" y="390.5" font-family="Liberation Serif" font-size="38" fill="#111">A</text>
<circle cx="46.7" cy="373" r="4.1" fill="none" stroke="#222" stroke-width="1.2"/>
<path d="M49.6 369 Q52 365.6 55.2 364.8" fill="none" stroke="#e0202a" stroke-width="1"/>
<path d="M41.1 378.8 H64.8" stroke="#444" stroke-width="1.1"/>
<path d="M43.9 380.8 V389.8 M61.4 380.8 V389.8" stroke="#111" stroke-width="1.6"/>
<path d="M46 385.4 L49.6 382.8 V384.5 H55.8 V382.8 L59.4 385.4 L55.8 388 V386.3 H49.6 V388 Z" fill="#e0202a"/>
<path d="M33.6 386.4 L33.6 392.0 L27.8 392.0 Z" fill="#6a6a6a"/>
<path d="M67.9 386.4 L67.9 392.0 L62.1 392.0 Z" fill="#6a6a6a"/>
<path d="M17.8 397.6 V419.9" stroke="#111" stroke-width="2.2"/>
<circle cx="17.8" cy="397.6" r="1.7" fill="#e0202a"/>
<circle cx="17.8" cy="419.9" r="1.7" fill="#e0202a"/>
<defs><pattern id="hat" width="3.4" height="3.4" patternUnits="userSpaceOnUse" patternTransform="rotate(38)"><rect width="3.4" height="3.4" fill="#fff"/><rect width="3.4" height="1.8" fill="#111"/></pattern></defs>
<path d="M40.4 397.3 H65.2 V405.6 L50.6 420.6 H40.4 Z" fill="url(#hat)"/>
<path d="M37.4 397.3 H67.6 M40.4 394.8 V423.4 M37.4 420.6 H57 M65.2 394.8 V412.4 M67 404.4 L48 424.2" stroke="#111" stroke-width="2.2" fill="none"/>
<circle cx="52.2" cy="408.5" r="1.5" fill="#e0202a"/>
<path d="M33.6 419.0 L33.6 424.6 L27.8 424.6 Z" fill="#6a6a6a"/>
<path d="M67.9 419.0 L67.9 424.6 L62.1 424.6 Z" fill="#6a6a6a"/>
<rect x="2" y="427.6" width="66.5" height="1.3" fill="#5a5a5a"/>
<path d="M3.6 442.4 L8.6 436.4" stroke="#d8202a" stroke-width="1.4"/><path d="M10 434.6 L9.6 439 L6.2 436.2 Z" fill="#d8202a"/>
<rect x="10.6" y="445.2" width="14.4" height="13" fill="none" stroke="#888" stroke-width="1"/>
<rect x="17.6" y="437.6" width="14.2" height="14.2" fill="none" stroke="#111" stroke-width="2.3"/>
<circle cx="17.8" cy="451.4" r="1.7" fill="#e0202a"/>
<circle cx="11.1" cy="458.2" r="1.7" fill="#e0202a"/>
<rect x="48.6" y="434.5" width="3.8" height="23.8" fill="#6cb8e8"/><rect x="61.8" y="434.5" width="4.4" height="23.8" fill="#5fb0e4"/>
<path d="M53.6 437.2 H49 A9.2 9.2 0 0 0 49 455.6 H53.6 V451 H49 A4.6 4.6 0 0 1 49 441.8 H53.6 Z" fill="url(#gMag)"/>
<rect x="53.6" y="437.2" width="3.2" height="4.6" fill="#f4f4f4"/><rect x="53.6" y="451" width="3.2" height="4.6" fill="#ddd"/>
<path d="M56.4 446.4 H59.6 V444.8 L62 446.4 L59.6 448 V446.4" fill="#d8202a" stroke="#d8202a" stroke-width=".8"/>
<path d="M33.6 455.0 L33.6 460.6 L27.8 460.6 Z" fill="#6a6a6a"/>
<path d="M67.9 455.0 L67.9 460.6 L62.1 460.6 Z" fill="#6a6a6a"/>
<rect x="2" y="464.3" width="66.5" height="1.3" fill="#5a5a5a"/>
<path d="M19.6 471.4 L4.8 483.4 L30.4 495.5 Z" fill="url(#gTri)"/>
<circle cx="19.6" cy="471.4" r="1.7" fill="#e0606c"/>
<circle cx="4.8" cy="483.4" r="1.7" fill="#e0606c"/>
<circle cx="30.2" cy="495.2" r="1.7" fill="#e0606c"/>
<path d="M52 471.4 L62.7 477.7 L52 484.1 L41.8 477.7 Z" fill="#5ea9e0"/><path d="M41.8 477.7 L52 484.1 V496.1 L41.8 489.8 Z" fill="#3d80c6"/><path d="M52 484.1 L62.7 477.7 V489.8 L52 496.1 Z" fill="#2a5c9e"/>
<circle cx="62.8" cy="479.0" r="2.1" fill="#d8101a"/>
<circle cx="41.8" cy="489.4" r="2.1" fill="#d8101a"/>
<circle cx="62.8" cy="489.4" r="2.1" fill="#d8101a"/>
<path d="M33.6 493.2 L33.6 498.8 L27.8 498.8 Z" fill="#6a6a6a"/>
<path d="M67.9 493.2 L67.9 498.8 L62.1 498.8 Z" fill="#6a6a6a"/>
<path d="M15.4 504 V529 M9.6 522.6 L22.4 509.4" stroke="#8a8a8a" stroke-width=".8"/>
<path d="M10.9 513.8 L20.5 504.2 V518 L10.9 528.4 Z" fill="#6cb440" opacity=".95"/>
<path d="M15.4 515.8 L23 517.2" stroke="#cc1820" stroke-width="2.1"/><path d="M27 518 L22.2 514.6 L21.6 520.4 Z" fill="#d8202a"/>
<path d="M38 521 C38 513.4 45 510 52.4 510 C60 510 66.9 513.4 66.9 521 L57.7 521 L52.4 515.4 L49.3 521 Z" fill="#5ab6f6"/>
<path d="M38 520.9 H49.3 V526.8 H38 Z M57.7 520.9 H66.9 V526.8 H57.7 Z" fill="#1d3b6a"/>
<path d="M49.3 520.9 L52.4 515.4 V523 L49.3 526.8 Z" fill="#16305a"/><path d="M57.7 520.9 L52.4 515.4 V523 L57.7 526.8 Z" fill="#244a80"/>
<path d="M52.3 513.8 V528.8" stroke="#b01018" stroke-width="2.2" stroke-linecap="round"/>
<path d="M47.2 508.2 C48 503.4 56.4 502.4 58.2 506.4" fill="none" stroke="#d8202a" stroke-width="2.5"/><path d="M60.4 510.4 L55.4 507.2 L60.6 504.2 Z" fill="#c81820"/>
<path d="M33.6 526.0 L33.6 531.6 L27.8 531.6 Z" fill="#6a6a6a"/>
<path d="M67.9 526.0 L67.9 531.6 L62.1 531.6 Z" fill="#6a6a6a"/>
<path d="M5.9 536.4 L10.5 539.3 L10.9 546.4 L7.1 542.6 Z" fill="#62ac3a"/>
<path d="M10.5 550.2 C11 547.4 12.4 546 13.8 545.2 C16 543 18 542 19.6 542.2 C21.6 543.2 22.8 545.2 24.2 546.8 C26 548.6 28 550 30.1 550.6 C27.6 551.4 25.6 552.6 24.2 554.3 C22.6 556.4 21.4 558.6 20.5 560.6 C18.4 559.6 16.6 558.4 15 556.9 C13 555 11.4 552.6 10.5 550.2 Z" fill="#5ca636"/>
<path d="M13.8 545.2 C17 545.4 19 546.6 20.1 547.7 C22 549.6 23 552 23.4 554.3" fill="none" stroke="#cc3040" stroke-width="1.1" stroke-dasharray="1.6 1.1"/>
<path d="M41.4 544.3 C44 539.6 47.6 537 51.4 536 C54.6 536 57 537.4 58.5 539.3 C60.4 541 61.6 543 62.3 545.2 L51.8 551 Z" fill="#52b0f6"/>
<path d="M41.4 544.3 L51.8 551 V561.5 L41.4 554.3 Z" fill="#2a5ea8"/><path d="M51.8 551 L62.3 545.2 V554.3 L51.8 561.5 Z" fill="#1a3f78"/>
<path d="M33.6 557.8 L33.6 563.4 L27.8 563.4 Z" fill="#6a6a6a"/>
<path d="M67.9 557.8 L67.9 563.4 L62.1 563.4 Z" fill="#6a6a6a"/>
<path d="M14.6 568.3 L25.1 574.6 L14.6 580.8 L4.2 574.6 Z" fill="#cf2f30"/><path d="M14.6 582.2 L25.1 587.1 L14.6 593.4 L4.2 587.1 Z" fill="#5cb030"/><path d="M14.6 582.2 L25.1 587.1 L14.6 588.6 Z" fill="#4a9828"/>
<path d="M29.2 586.4 V578.6" stroke="#c8101a" stroke-width="1.9"/><path d="M29.2 575 L32.4 580 H26 Z" fill="#c8101a"/>
<path d="M39.7 581 L52.2 588 L64.8 581 V587.6 L52.2 594.4 L39.7 587.6 Z" fill="#3d80c6"/><path d="M52.2 588 L64.8 581 V587.6 L52.2 594.4 Z" fill="#2f68b0"/>
<path d="M39.7 572.4 L52.2 568 L64.8 572.4 V581 L52.2 588 L39.7 581 Z" fill="url(#gPink)"/>
<path d="M52.2 578 V571" stroke="#c8101a" stroke-width="1.9"/><path d="M52.2 567.4 L55.4 572.4 H49 Z" fill="#c8101a"/>
<path d="M33.6 590.6 L33.6 596.2 L27.8 596.2 Z" fill="#6a6a6a"/>
<path d="M67.9 590.6 L67.9 596.2 L62.1 596.2 Z" fill="#6a6a6a"/>
<path d="M23.8 606.8 L28.1 605.6 Q30.6 608 30.2 611 L29.5 615.2 L24.5 617 L19 622.4 L23.4 624.6 L18 625.6 Z" fill="#161616"/>
<path d="M6.6 610.6 Q7.6 605.2 10.6 603 Q14.6 600.4 19 601 L22.4 602.4 Q24.6 604.4 23.9 606.9 Q21 607.6 19.6 611 L16.6 616.6 Z" fill="#e62e34"/>
<path d="M11 606 L17 612.6" stroke="#f08080" stroke-width="2.2" opacity=".6"/>
<path d="M5.3 611.2 L6.6 610.6 L16.6 616.6 L15.6 620 Q16.6 623.6 18.8 625 Q16 626.4 13 625 Q8.6 622.6 6.4 617.6 Q5.2 614.4 5.3 611.2 Z" fill="#3f9628"/>
<path d="M18 610.6 Q19.6 608 21.8 607.4 L21 614 L16.2 617.8 Z" fill="#f4f4f4"/>
<path d="M21.8 607.4 Q23 607.2 23.9 608.2 Q24.2 612.6 23 616.2 L19.4 620 Q17.6 621.6 16.4 619.6 L16.2 617.8 L21 614 Z" fill="#5cc038"/>
<path d="M18.8 625 Q21.6 625.6 23.8 624.2 L24.6 621 L21 622.6 Z" fill="#3f9628"/>
<path d="M24.8 624.8 C28.8 626.4 32 623.4 31.2 620 C30.6 617.4 27.6 616.6 25.6 617.8" fill="none" stroke="#d8404a" stroke-width="1.1"/><path d="M23.6 617 L26.6 616 L26.2 619.2 Z" fill="#c8202a"/>
<path d="M37.8 609 C37.8 604.6 42.4 602 47.4 602.4 L55.6 601.4 L62.6 605.6 L66.8 608 V618 L56.4 625.6 L52.4 622.4 C50 625 46.6 625.8 43.4 625.2 C40 624.4 37.8 622 37.8 619 Z" fill="#10325e" stroke="#0a1420" stroke-width="1"/>
<path d="M38.2 609 C38.4 605 42.6 602.6 47.2 602.8 C51.4 603 55 605.2 55 609 C55 612.6 51 615 46.4 615 C42 614.8 38.2 612.6 38.2 609 Z" fill="#7ac6fc" stroke="#0a1420" stroke-width=".9"/>
<path d="M46.4 608.4 L55.6 601.6 L66.6 608 L56.6 614.8 Z" fill="#5ab4f6" stroke="#0a1420" stroke-width=".9" fill-opacity=".85"/>
<path d="M62 601.6 V610 M57.8 605.8 H66.2" stroke="#d8101a" stroke-width="2.2"/>
<path d="M33.6 623.0 L33.6 628.6 L27.8 628.6 Z" fill="#6a6a6a"/>
<path d="M67.9 623.0 L67.9 628.6 L62.1 628.6 Z" fill="#6a6a6a"/>
<rect x="2" y="630.9" width="66.5" height="1.3" fill="#5a5a5a"/>
<g stroke="#e6c862" stroke-width="1.05" stroke-linecap="round"><path d="M13.2 654.8 L21.5 663.4"/><path d="M14.8 653.2 L23.1 661.9"/><path d="M16.3 651.7 L24.6 660.3"/><path d="M17.9 650.1 L26.2 658.8"/><path d="M19.5 648.6 L27.8 657.2"/><path d="M21.1 647.0 L29.4 655.6"/><path d="M22.6 645.5 L30.9 654.1"/></g>
<circle cx="12.6" cy="645" r="7.5" fill="url(#gBall)"/>
<path d="M38.4 638.3 H61.4 L66.6 643.2 V662.8 H38.4 Z" fill="#f2f2f2" stroke="#111" stroke-width="2.2" stroke-linejoin="miter"/>
<path d="M61.2 638.6 V643.4 H66.4" fill="none" stroke="#555" stroke-width="1"/>
<path d="M52.6 639 V662.4 M39 650.8 H66.2" stroke="#333" stroke-width="1.5"/>
<circle cx="46" cy="644.9" r="3.2" fill="none" stroke="#333" stroke-width="1"/>
<rect x="56.4" y="642.4" width="4" height="5.6" rx="1" fill="#1c58d0"/><ellipse cx="58.4" cy="642.6" rx="2" ry=".9" fill="#7ab0ff"/>
<rect x="43.2" y="653.6" width="5.6" height="5.6" fill="none" stroke="#777" stroke-width=".9"/><rect x="55.6" y="653.6" width="5.6" height="5.6" fill="none" stroke="#777" stroke-width=".9"/>
<path d="M33.6 660.2 L33.6 665.8 L27.8 665.8 Z" fill="#6a6a6a"/>
<path d="M67.9 660.2 L67.9 665.8 L62.1 665.8 Z" fill="#6a6a6a"/>
<rect x="2" y="668.4" width="66.5" height="1.3" fill="#5a5a5a"/>
<path d="M6.4 677.6 H9 L10 676 H13.6 L14.4 677.6 H18.2 V687 H6.4 Z" fill="#2c2c2c"/><rect x="10.4" y="679.6" width="5" height="4.6" rx="1" fill="#555"/>
<path d="M5 676 L3.6 679" stroke="#555" stroke-width=".8"/>
<path d="M11.4 687 L9.8 690 L5 697.6 M9.8 690 L9.8 697.6 M9.8 690 L15 696.4" fill="none" stroke="#555" stroke-width=".9"/>
<circle cx="5.0" cy="697.6" r="0.9" fill="#222"/>
<circle cx="9.8" cy="698.2" r="0.9" fill="#222"/>
<circle cx="15.0" cy="696.4" r="0.9" fill="#222"/>
<circle cx="26.5" cy="682.1" r="4.1" fill="none" stroke="#d8202a" stroke-width="1"/><path d="M26.5 676.6 V680.2 M26.5 684 V687.6 M21 682.1 H24.6 M28.4 682.1 H32" stroke="#d8202a" stroke-width=".9"/>
<circle cx="46.6" cy="678.6" r="3.3" fill="#3a3a3a"/><circle cx="52.8" cy="678" r="3.8" fill="#4a4a4a"/>
<path d="M44.2 681.6 H55 V690 H44.2 Z" fill="#3c3c3c"/><path d="M55 684 L58.6 682.8 V688.8 L55 687.6 Z" fill="#3a6ab0"/>
<path d="M47.6 690 L43.6 698.4 L41.6 697.6 M50 690 L53.6 697.6 L56 698.8" fill="none" stroke="#2a2a2a" stroke-width="1.5"/>
<path d="M58 684.6 C63.6 685 66 687.4 63.6 689.6 C60 692.4 49 693 43.6 691.2" fill="none" stroke="#d8303a" stroke-width="1.3"/><path d="M41.6 690.6 L45 689 L44.6 692.8 Z" fill="#d8303a"/>
<path d="M33.6 697.4 L33.6 703.0 L27.8 703.0 Z" fill="#6a6a6a"/>
<path d="M67.9 697.4 L67.9 703.0 L62.1 703.0 Z" fill="#6a6a6a"/>
<rect x="2" y="705.4" width="66.5" height="1.3" fill="#5a5a5a"/>
<path d="M22 713.6 C15 712.6 9.4 718 7.8 725.6" fill="none" stroke="#2a5cb4" stroke-width="3.6"/><path d="M3.8 725.2 L12.2 726.6 L7.2 732.6 Z" fill="#2a5cb4"/>
<path d="M15 736.4 C22 736.6 27.4 731.6 28.6 725.6" fill="none" stroke="#e0303c" stroke-width="3.4"/><path d="M24.6 725.8 L29.6 718.6 L32.8 726.6 Z" fill="#e0303c"/>
<path d="M8 736.4 L19.4 724.6" stroke="#50de3c" stroke-width="3.6" stroke-linecap="round"/><path d="M23.4 719.6 L22.6 728.4 L16 722.4 Z" fill="#50de3c"/>
<circle cx="49.6" cy="722" r="8.6" fill="none" stroke="#444" stroke-width="2.3"/><path d="M49.6 717.4 V726.6 M45 722 H54.2" stroke="#444" stroke-width="1.8"/>
<path d="M56 728.6 L61.6 735.6" stroke="#3c3c3c" stroke-width="3.8" stroke-linecap="round"/>
<path d="M33.6 734.0 L33.6 739.6 L27.8 739.6 Z" fill="#6a6a6a"/>
<path d="M67.9 734.0 L67.9 739.6 L62.1 739.6 Z" fill="#6a6a6a"/>
<rect x="2" y="742.7" width="66.5" height="1.3" fill="#5a5a5a"/>
<path d="M12.2 748.0 L21.8 753.4 L21.8 764.2 L12.2 769.6 L2.6 764.2 L2.6 753.4Z" fill="none" stroke="#333" stroke-width="1.5" stroke-linejoin="round"/>
<path d="M12.2 760.0 L21.8 753.4 M12.2 760.0 L2.6 753.4 M12.2 760.0 L12.2 769.6" stroke="#333" stroke-width="1.5" fill="none"/>
<path d="M12.2 757.6 L12.2 748.0 M12.2 757.6 L21.8 764.2 M12.2 757.6 L2.6 764.2" stroke="#333" stroke-width="1.4" fill="none"/>
<path d="M35.5 748.0 L45.1 753.4 L45.1 764.2 L35.5 769.6 L25.9 764.2 L25.9 753.4Z" fill="none" stroke="#333" stroke-width="1.5" stroke-linejoin="round"/>
<path d="M35.5 760.0 L45.1 753.4 M35.5 760.0 L25.9 753.4 M35.5 760.0 L35.5 769.6" stroke="#333" stroke-width="1.5" fill="none"/>
<path d="M58.1 748.0 L67.7 753.4 L67.7 764.2 L58.1 769.6 L48.5 764.2 L48.5 753.4Z" fill="none" stroke="#333" stroke-width="1.5" stroke-linejoin="round"/>
<path d="M58.1 760.0 L67.7 753.4 M58.1 760.0 L48.5 753.4 M58.1 760.0 L58.1 769.6" stroke="#333" stroke-width="1.5" fill="none"/>
<path d="M58.1 757.6 L58.1 748.0 M58.1 757.6 L67.7 764.2 M58.1 757.6 L48.5 764.2" stroke="#aaa" stroke-width=".8" fill="none"/>
<rect x="1.1" y="771.8" width="22.8" height="18" fill="#7db2ea"/>
<path d="M12.2 773.4 L21.8 779 L12.2 784.8 L2.8 779 Z" fill="#8a8a8a"/><path d="M2.8 779 L12.2 784.8 V792 L2.8 792 Z" fill="url(#gCubeL)"/><path d="M12.2 784.8 L21.8 779 V792 H12.2 Z" fill="#1c1c1c"/>
<path d="M35.5 774 L45.6 778.8 L44.6 792 M35.5 774 L25.6 778.8 L26.6 792 M25.6 778.8 L35.6 784.6 L45.6 778.8 M35.6 784.6 V792" fill="none" stroke="#333" stroke-width="1.5" stroke-linejoin="round"/>
<rect x="47.8" y="773.6" width="20.6" height="18" fill="#f4f4f4"/><rect x="47.8" y="773.6" width="20.6" height="5.6" fill="#dcdcdc"/>
<circle cx="51.4" cy="776.6" r="1.5" fill="#e0606c"/>
<circle cx="56.4" cy="776.6" r="1.5" fill="#e8b040"/>
<circle cx="61.4" cy="776.6" r="1.5" fill="#70c050"/>
<path d="M58.1 780.8 L64.4 784 V792 M58.1 780.8 L51.8 784 V792 M51.8 784 L58.1 787.4 L64.4 784 M58.1 787.4 V792" fill="none" stroke="#444" stroke-width="1.1"/>
</svg>
<div class="abs" style="left:70.5px;top:120.8px;width:194.4px;height:50px;background:#efefef;border-radius:6px;box-shadow:0 0 0 .6px #c0c0c0, 0 4px 14px rgba(0,0,0,.22)"></div>
<div class="abs" style="left:70.5px;top:120.8px;width:194.4px;height:19.4px;background:#e8e8e8;border-radius:6px 6px 0 0;border-bottom:1px solid #d2d2d2"></div>
<svg class="abs" style="left:60px;top:110px" width="220" height="70" viewBox="60 110 220 70">
<defs>
<linearGradient id="st1" x1="0" y1="0" x2="1" y2="1"><stop offset="0" stop-color="#9fb4c4"/><stop offset="1" stop-color="#5f7b8f"/></linearGradient>
<linearGradient id="st2" x1="0" y1="0" x2="1" y2="0"><stop offset="0" stop-color="#8ea7b8"/><stop offset="1" stop-color="#6d899c"/></linearGradient>
<linearGradient id="rar" x1="1" y1="1" x2="0" y2="0"><stop offset="0" stop-color="#f0b0b0" stop-opacity=".6"/><stop offset="1" stop-color="#d02a30"/></linearGradient>
</defs>
<circle cx="79.4" cy="130" r="4.3" fill="#d6d6d6" stroke="#c0c0c0" stroke-width=".8"/>
<!-- icon1: sheet + red outline + arrow -->
<path d="M86.7 157.8 L97.2 161 L86.7 168 L76.3 161.4 Z" fill="none" stroke="#d03a3a" stroke-width="1"/>
<path d="M75.8 151.4 L86.7 144.6 L97.6 150.3 V151.6 L86.7 158.8 L75.8 152.6 Z" fill="#3c5364"/>
<path d="M75.8 151.4 L86.7 144.6 L97.6 150.3 L86.7 157.4 Z" fill="url(#st1)"/>
<path d="M86.7 144.6 L97.6 150.3 L86.7 157.4 Z" fill="#6f8b9e" opacity=".55"/>
<path d="M98.7 159.8 V154.6" stroke="#c8101a" stroke-width="1.7"/><path d="M98.7 151.6 L101.2 155.6 H96.2 Z" fill="#c8101a"/>
<!-- icon2: bend -->
<path d="M108 152.4 L115.8 147 L124 152 L116.4 157.6 Z" fill="#fff" stroke="#222" stroke-width=".9"/>
<path d="M111 153 L115 150.6" stroke="#d02a30" stroke-width="1.3"/>
<path d="M116.2 149.4 L123.4 145.8 L124.8 146.8 V157 L117.6 160.2 Z" fill="#4f677a"/>
<path d="M116.2 149.4 L123.4 145.8 L124.8 146.8 L117.6 150.6 Z" fill="#a9bccb"/>
<path d="M116.2 149.4 L117.6 150.6 V160.2 L116.2 159.2 Z" fill="#26303a"/>
<path d="M118.4 160 L124.8 156.4 L132 160.8 L125.2 165.4 Z" fill="url(#st2)"/>
<path d="M116.6 160 L118.4 160 L125.2 165.4 L132 160.8 V162 L125.2 166.6 Z" fill="#3c5060"/>
<!-- icon3: jog Z -->
<path d="M139.8 150 L148.8 145.2 L157.4 149.6 L148.4 154.4 Z" fill="url(#st2)"/>
<path d="M148.4 154.4 L157.4 149.6 V158.6 L148.4 163.4 Z" fill="#4a6274"/>
<path d="M148.4 163 L157.4 158.2 L165.8 163 L156.6 168 Z" fill="url(#st2)"/>
<path d="M139.6 150.2 L147.4 154.6 V163.4 L156.2 168.2" fill="none" stroke="#d8303a" stroke-width="1.4"/>
<!-- icon4 selected: flange -->
<rect x="169" y="139.9" width="30" height="30.3" fill="#7aaee6"/>
<path d="M173.7 151.9 L183.6 144 L184.8 144.8 V155 L195.2 160.7 L186.4 168.2 L176.4 162.6 Q173.8 160.8 173.7 158 Z" fill="#27313c"/>
<path d="M175.2 152.6 L184.6 145.2 V154.6 L175.8 160.4 Z" fill="#4d6578"/>
<path d="M173.8 151.8 L183.6 144 L184.8 144.8 L175.2 152.7 Z" fill="#a9bccb"/>
<path d="M176.6 160.8 L184.8 155.2 L194.8 160.7 L186.4 166.8 Z" fill="url(#st1)"/>
<path d="M176 160.3 L184.7 154.6 L185.4 155.6 L176.9 161.4 Z" fill="#c5d3dc"/>
<!-- icon5: hem -->
<path d="M209.6 155.6 L225.4 144.6 L226.6 145.4 V157.2 L211.4 167.6 L209.6 166.4 Z" fill="#2e3a46"/>
<path d="M211.2 156.4 L226.4 146 V157 L211.4 167.2 Z" fill="#566c7e"/>
<path d="M209.6 155.6 L225.4 144.6 L226.6 145.4 L211.2 156.6 Z" fill="#a3b8c8"/>
<path d="M208.6 157 H210 V160.6 H208.6 Z" fill="#8a9aa6"/>
<!-- icon6: unbend -->
<path d="M236.8 149.4 L246.2 143.6 L261.8 160.6 V161.8 L252.4 168.4 L242 160.2 Z" fill="#5f7688"/>
<path d="M236.8 149.4 L246.2 143.6 L251.4 152.6 L242 159.4 Z" fill="#aebfcc"/>
<path d="M242 159.4 L251.4 152.6 L261.8 160.6 L252.4 167 Z" fill="#9eb3c2"/>
<path d="M257.6 160.6 C257.6 154.6 253.6 150.6 249.2 150 L249.8 147.6 L243.4 149.4 L247.2 154.8 L247.8 152.6 C251 153.6 253.2 157 253.4 161.4 Z" fill="url(#rar)"/>
</svg>

</div>
</body>
</html>
